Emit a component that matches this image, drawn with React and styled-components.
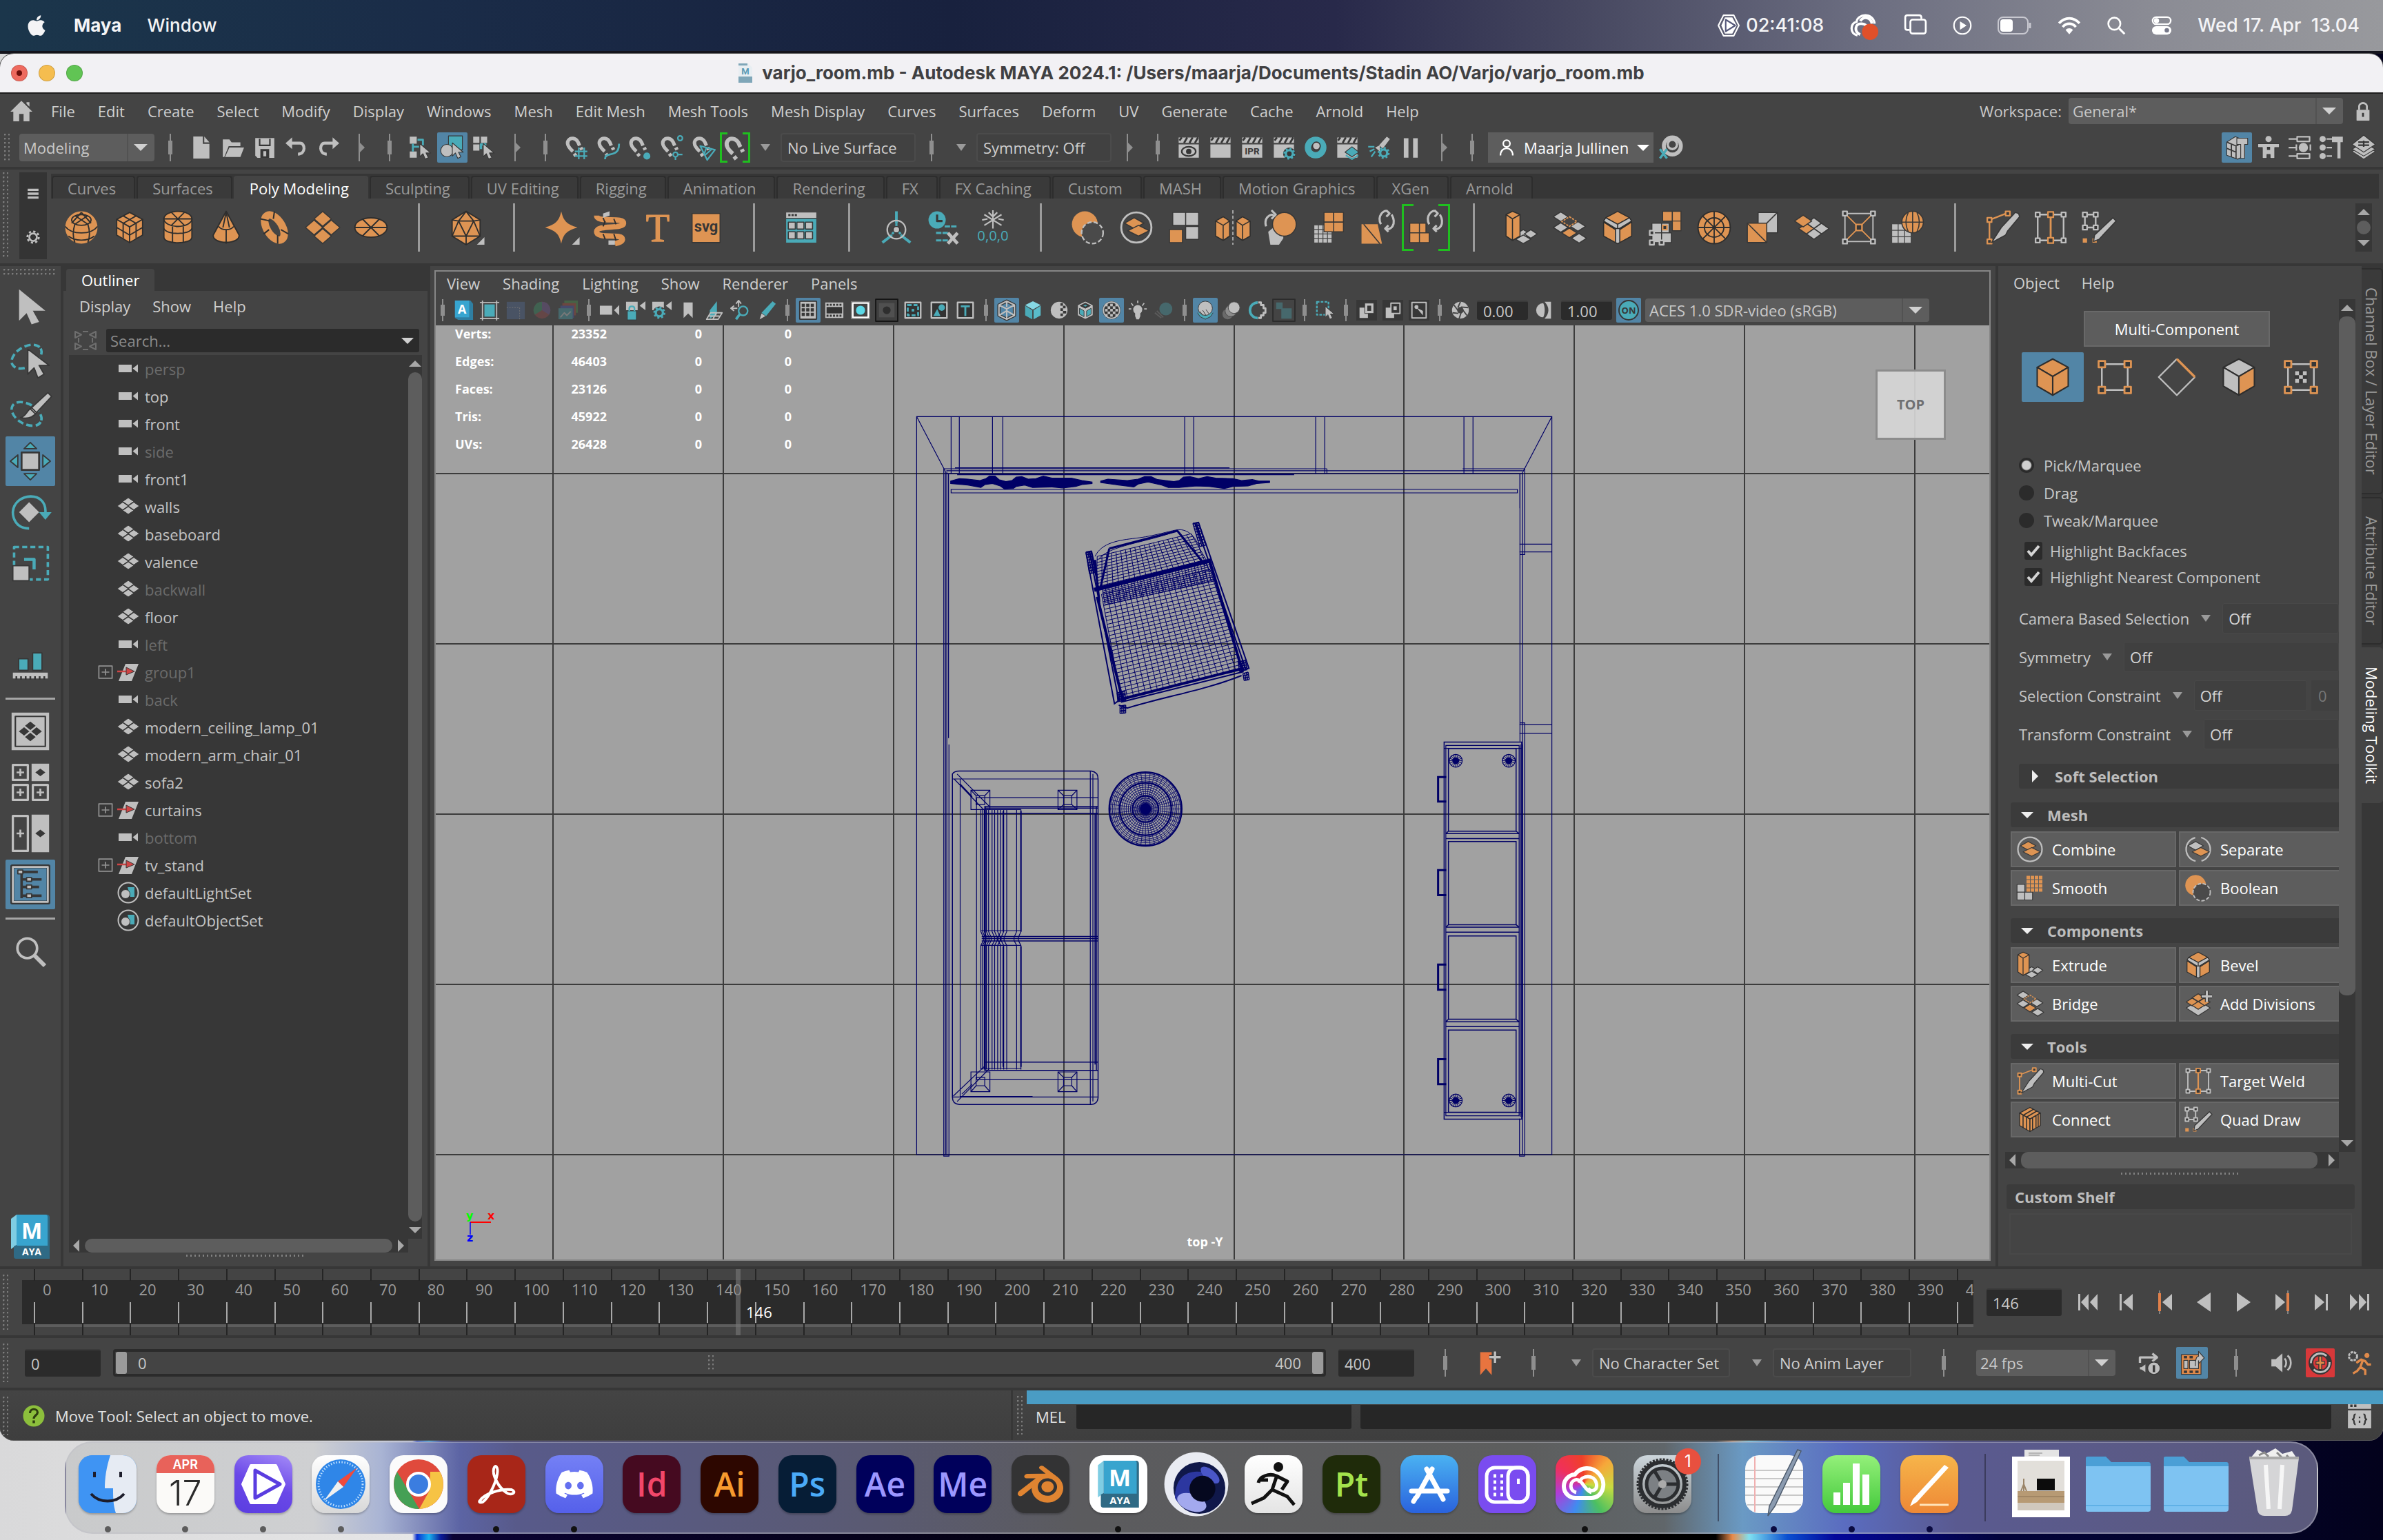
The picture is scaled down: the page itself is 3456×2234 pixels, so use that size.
import React from "react";
import styled, { createGlobalStyle, css } from "styled-components";
import { FaApple, FaDiscord } from "react-icons/fa";
import { SiBlender } from "react-icons/si";

const O = "#de9453";
const G = "#bfbfbf";
const T = "#4aabb8";
const D = "#373737";
const NAVY = "#000066";

const ui = `"Open Sans", "Noto Sans", sans-serif`;
const mac = `Inter, Roboto, sans-serif`;

const GlobalStyle = createGlobalStyle`
  * { box-sizing: border-box; }
  html, body { margin: 0; height: 100%; }
  body { font: 22px/28px ${ui}; color: #c8c8c8; background: #0b0524; overflow: hidden; }
  button, input, select { font: inherit; color: inherit; margin: 0; padding: 0; border: 0; background: none; outline: none; }
  svg { display: block; flex: none; }
`;

/* ---------- desktop ---------- */
const Desktop = styled.div`
  min-height: 100vh;
  display: flex;
  flex-direction: column;
  background: linear-gradient(90deg, #d9d9da 0, #e6e6e7 17.3%, #0b2fd0 17.5%, #19b3ee 18%, #0a1a9a 18.5%, #0b0333 19%, #06021c 35%, #020108 55%, #000 72%, #e88a4a 72.7%, #7fe0f0 73.4%, #0a4fd0 75%, #04079a 77%, #03043a 84%, #03021c 100%);
`;
const MenuBar = styled.header`
  height: 74px;
  flex: none;
  display: flex;
  align-items: center;
  justify-content: space-between;
  padding: 0 34px 0 36px;
  font: 26px/32px ${mac};
  color: #f4f4f6;
  background: linear-gradient(90deg, #1b364b 0, #1a2c48 18%, #18213e 40%, #28294a 56%, #45465f 66%, #6b6d80 78%, #8a8b94 90%, #98999d 100%);
  box-shadow: 0 4px 0 #14141c;
`;
const MenuGroup = styled.div`
  display: flex;
  align-items: center;
  gap: ${(p) => p.$gap}px;
`;
const MacItem = styled.button`
  font-weight: ${(p) => (p.$bold ? 700 : 500)};
`;
const Clock = styled.time`
  font-size: 27px;
  font-weight: 500;
  white-space: pre;
`;

/* ---------- window ---------- */
const Win = styled.main`
  flex: 1;
  min-height: 0;
  margin: 4px 0 2px;
  display: flex;
  flex-direction: column;
  border-radius: 20px;
  overflow: hidden;
  background: #444;
  box-shadow: 0 0 0 1px #5a5a5a;
`;
const TitleBar = styled.div`
  height: 58px;
  flex: none;
  display: grid;
  grid-template-columns: 1fr auto 1fr;
  align-items: center;
  padding: 0 16px;
  background: #f2f1f4;
  border-bottom: 2px solid #1e1e1e;
`;
const Lights = styled.div`
  display: flex;
  gap: 16px;
`;
const Light = styled.button`
  width: 24px;
  height: 24px;
  border-radius: 50%;
  background: ${(p) => p.$c};
  border: 1px solid rgba(0, 0, 0, 0.15);
  display: grid;
  place-items: center;
  &::after {
    content: "";
    width: 8px;
    height: 8px;
    border-radius: 50%;
    background: ${(p) => (p.$dot ? "#6d0f0b" : "transparent")};
  }
`;
const Title = styled.h1`
  margin: 0;
  display: flex;
  align-items: center;
  gap: 14px;
  font: 700 26px/32px ${mac};
  color: #404042;
`;
const Line = styled.div`
  height: 4px;
  flex: none;
  background: ${D};
`;
const MainMenu = styled.nav`
  height: 50px;
  flex: none;
  display: flex;
  align-items: center;
  justify-content: space-between;
  padding: 0 14px 0 14px;
`;
const Menus = styled.div`
  display: flex;
  align-items: center;
  gap: 33px;
`;
const MenuBtn = styled.button`
  color: #cfcfcf;
  white-space: nowrap;
`;
const Home = styled.button`
  margin-right: -7px;
`;
const Workspace = styled.label`
  display: flex;
  align-items: center;
  gap: 10px;
`;

/* combo box */
const ComboBox = styled.span`
  display: flex;
  align-items: center;
  flex: none;
  position: relative;
  width: ${(p) => p.$w}px;
  height: ${(p) => p.$h || 40}px;
  border-radius: 4px;
  background: #5d5d5d;
  color: #c9c9c9;
  select {
    appearance: none;
    width: 100%;
    height: 100%;
    padding: 0 40px 0 6px;
    font: 22px/28px ${ui};
  }
  &::before {
    content: "";
    position: absolute;
    right: 38px;
    top: 0;
    bottom: 0;
    width: 2px;
    background: #525252;
  }
  &::after {
    content: "";
    position: absolute;
    right: 10px;
    border: 10px solid transparent;
    border-top-color: #d0d0d0;
    border-bottom-width: 0;
  }
`;
const Combo = ({ w, h, value, label }) => (
  <ComboBox $w={w} $h={h}>
    <select aria-label={label} defaultValue={value}>
      <option>{value}</option>
    </select>
  </ComboBox>
);

const Dots = styled.div`
  flex: none;
  width: ${(p) => p.$w || 8}px;
  height: ${(p) => p.$h || 8}px;
  background: radial-gradient(circle at 1px 1px, #7c7c7c 1px, transparent 2px) 0 0 / 6px 6px;
`;

/* separators between groups of tools */
const Sep = styled.i`
  flex: none;
  width: ${(p) => p.$w || 42}px;
  height: ${(p) => p.$h || 40}px;
  display: flex;
  align-items: center;
  justify-content: center;
  position: relative;
  &::before {
    content: "";
    width: 2px;
    height: 100%;
    background: #8f8f8f;
  }
  &::after {
    content: "";
    position: absolute;
    left: 50%;
    ${(p) =>
      p.$arrow
        ? css`
            border: 8px solid transparent;
            border-left-color: #8f8f8f;
            border-right-width: 0;
          `
        : css`
            width: 6px;
            height: 50%;
            margin-left: -3px;
            background: #8f8f8f;
          `}
  }
`;
const Down = styled.i`
  flex: none;
  width: ${(p) => p.$w || 20}px;
  display: grid;
  place-items: center;
  &::after {
    content: "";
    border: 7px solid transparent;
    border-top: 10px solid #9a9a9a;
    border-bottom-width: 0;
  }
`;
const Field = styled.button`
  flex: none;
  width: ${(p) => p.$w}px;
  height: 42px;
  padding: 0 8px;
  text-align: left;
  border: 2px solid #4b4b4b;
  border-radius: 4px;
  background: #414141;
  color: #cfcfcf;
`;
const NumberInput = styled.input`
  flex: none;
  width: ${(p) => p.$w}px;
  height: ${(p) => p.$h || 40}px;
  padding: 0 9px;
  border-radius: 3px;
  background: #2b2b2b;
  border-top: 2px solid #3a3a3a;
  color: #c8c8c8;
`;

/* status line */
const StatusLine = styled.div`
  height: 56px;
  flex: none;
  display: flex;
  align-items: center;
  gap: 2px;
  padding: 0 6px;
`;
const Tool = styled.button`
  flex: none;
  width: ${(p) => p.$w || 44}px;
  height: ${(p) => p.$h || p.$w || 44}px;
  display: grid;
  place-items: center;
  border-radius: 2px;
  background: ${(p) => (p.$on ? "#5285a6" : "transparent")};
  opacity: ${(p) => (p.$dim ? 0.35 : 1)};
  ${(p) =>
    p.$live &&
    css`
      border: 3px solid #1fbf1f;
      border-image: linear-gradient(90deg, #1fbf1f 24%, transparent 24%, transparent 76%, #1fbf1f 76%) 3;
    `}
`;
const RedTool = styled(Tool)`
  background: #d8383a;
`;
const Grow = styled.span`
  flex: 1;
`;
const UserBtn = styled.button`
  flex: none;
  width: 240px;
  height: 44px;
  display: flex;
  align-items: center;
  gap: 12px;
  padding: 0 8px 0 14px;
  background: #5d5d5d;
  color: #fff;
  white-space: nowrap;
`;

/* shelf */
const Shelf = styled.section`
  height: 136px;
  flex: none;
  display: flex;
  padding: 4px 6px 6px 4px;
`;
const ShelfSide = styled.div`
  width: 40px;
  margin-left: 16px;
  display: flex;
  flex-direction: column;
  align-items: center;
  justify-content: space-around;
  background: #343434;
`;
const ShelfBody = styled.div`
  flex: 1;
  margin: 2px 0 0 6px;
`;
const Tabs = styled.div`
  height: 36px;
  display: flex;
  align-items: flex-end;
  gap: 2px;
  padding-left: 1px;
  background: #363636;
`;
const Tab = styled.button`
  height: 33px;
  padding: 0 26px 0 21px;
  border: 2px solid #2d2d2d;
  border-bottom: 0;
  border-radius: 4px 4px 0 0;
  color: ${(p) => (p.$on ? "#fff" : "#9a9a9a")};
  background: ${(p) => (p.$on ? "#444" : "#3a3a3a")};
  ${(p) => p.$on && "border-color: #444;"}
  white-space: nowrap;
`;
const ShelfIcons = styled.div`
  height: 84px;
  display: flex;
  align-items: center;
  padding: 0 10px 0 9px;
`;
const ShelfRule = styled.i`
  width: 68px;
  display: grid;
  place-items: center;
  &::after {
    content: "";
    width: 3px;
    height: 70px;
    background: #9b9b9b;
  }
`;

/* main region */
const Body = styled.div`
  flex: 1;
  min-height: 0;
  display: flex;
  background: ${D};
`;
const ToolBox = styled.aside`
  width: 88px;
  flex: none;
  margin-right: 4px;
  padding: 4px 0 11px;
  display: flex;
  flex-direction: column;
  align-items: center;
  gap: 2px;
  background: #444;
`;
const ToolDots = styled(Dots)`
  margin-bottom: 7px;
`;
const ToolRule = styled.i`
  width: 72px;
  height: 3px;
  margin: 10px 0 8px;
  background: #a6a6a6;
`;
const Blank = styled.span`
  height: 71px;
`;
const Outliner = styled.section`
  width: 528px;
  flex: none;
  display: flex;
  flex-direction: column;
  padding-top: 4px;
`;
const PanelTab = styled.button`
  align-self: flex-start;
  height: 32px;
  margin-left: 4px;
  padding: 0 22px;
  border-radius: 4px 4px 0 0;
  background: #444;
  color: #fff;
`;
const OutlinerBody = styled.div`
  flex: 1;
  min-height: 0;
  display: flex;
  flex-direction: column;
  padding: 0 8px 14px;
  background: #444;
`;
const OutlinerMenus = styled.div`
  height: 43px;
  display: flex;
  align-items: center;
  gap: 32px;
  padding-left: 15px;
`;
const SearchRow = styled.div`
  height: 50px;
  display: flex;
  align-items: center;
  gap: 14px;
  padding: 8px 4px 0 8px;
`;
const SearchBox = styled.label`
  flex: 1;
  height: 34px;
  display: flex;
  align-items: center;
  padding: 0 8px 0 6px;
  border-radius: 3px;
  background: #2b2b2b;
  input { flex: 1; min-width: 0; }
  input::placeholder { color: #8a8a8a; opacity: 1; }
`;
const TreeWrap = styled.div`
  flex: 1;
  min-height: 0;
  display: flex;
  background: ${D};
`;
const Tree = styled.ul`
  flex: 1;
  margin: 0;
  padding: 0;
  list-style: none;
  overflow: hidden;
`;
const Row = styled.li`
  height: 40px;
  display: grid;
  grid-template-columns: 22px 34px 1fr;
  column-gap: 6px;
  align-items: center;
  padding-left: 42px;
  color: ${(p) => (p.$dim ? "#6b6b6b" : "#c4c4c4")};
`;
const VScroll = styled.div`
  width: ${(p) => p.$w || 20}px;
  flex: none;
  display: flex;
  flex-direction: column;
  align-items: center;
  background: ${D};
`;
const HScroll = styled.div`
  height: ${(p) => p.$h || 20}px;
  flex: none;
  display: flex;
  align-items: center;
  padding: 0 6px;
  gap: 8px;
  margin: 0 ${(p) => p.$mr || 0}px 0 ${(p) => p.$ml || 0}px;
  background: ${D};
`;
const Thumb = styled.i`
  flex: ${(p) => p.$f || 1};
  align-self: stretch;
  border-radius: 10px;
  background: #5d5d5d;
`;
const ScrollRest = styled.i`
  flex: ${(p) => p.$f};
`;
const Caret = styled.i`
  flex: none;
  width: 0;
  height: 0;
  margin: ${(p) => p.$m || 0};
  border: 9px solid transparent;
  border-${(p) => p.$d}: 9px solid ${(p) => p.$c || "#a8a8a8"};
  border-${(p) => ({ top: "bottom", bottom: "top", left: "right", right: "left" })[p.$d]}-width: 0;
`;
const DotRow = styled.i`
  align-self: center;
  width: 172px;
  height: 3px;
  margin: ${(p) => p.$m || "3px 0 0"};
  background: repeating-linear-gradient(90deg, #828282 0 2px, transparent 2px 6px);
`;

/* viewport */
const ViewPanel = styled.section`
  flex: 1;
  min-width: 0;
  margin-left: 4px;
  padding: 6px 7px 8px 6px;
  display: flex;
  background: #444;
`;
const ViewFrame = styled.div`
  flex: 1;
  min-width: 0;
  display: flex;
  flex-direction: column;
  border: 2px solid #868686;
`;
const ViewMenus = styled.div`
  height: 34px;
  display: flex;
  align-items: center;
  gap: 33px;
  padding-left: 16px;
`;
const ViewTools = styled.div`
  height: 44px;
  display: flex;
  align-items: center;
  gap: 2px;
`;
const ViewValues = styled.div`
  display: flex;
  align-items: center;
  gap: 6px;
  margin-left: 4px;
`;
const Canvas = styled.div`
  flex: 1;
  min-height: 0;
  position: relative;
  overflow: hidden;
  background: #a1a1a1;
  > svg { width: 100%; height: 100%; }
`;
const Stats = styled.table`
  position: absolute;
  left: 28px;
  top: -8px;
  border-collapse: collapse;
  font: 700 18px/24px ${ui};
  color: #fff;
  th { text-align: left; width: 160px; }
  th, td { padding: 0; height: 40px; font-weight: 700; }
  td { text-align: right; width: 130px; }
  td:nth-child(2) { width: 60px; }
  td:nth-child(3) { width: 138px; }
`;
const ViewCube = styled.button`
  position: absolute;
  right: 63px;
  top: 64px;
  width: 102px;
  height: 102px;
  border: 3px solid #8c8c8c;
  background: rgba(214, 214, 214, 0.92);
  color: #6e7072;
  font: 700 20px/24px ${ui};
`;
const CameraName = styled.span`
  position: absolute;
  left: 0;
  right: 0;
  bottom: 14px;
  padding-right: 22px;
  text-align: center;
  font: 700 18px/24px ${ui};
  color: #fff;
`;
const Axis = styled.svg`
  position: absolute;
  left: 34px;
  bottom: 2px;
  && { width: 80px; height: 80px; }
`;
const Room = styled.g`
  path, ellipse { vector-effect: non-scaling-stroke; }
`;

/* modeling toolkit */
const Kit = styled.aside`
  width: 527px;
  flex: none;
  margin-left: 4px;
  display: flex;
  flex-direction: column;
  background: #444;
`;
const KitMenus = styled.div`
  height: 48px;
  display: flex;
  align-items: center;
  gap: 32px;
  padding-left: 22px;
`;
const KitScroll = styled.div`
  flex: 1;
  min-height: 0;
  display: flex;
  padding-right: 9px;
`;
const KitContent = styled.div`
  flex: 1;
  min-width: 0;
  overflow: hidden;
  padding: 17px 0 0 18px;
`;
const MultiBtn = styled.button`
  display: block;
  width: 270px;
  height: 52px;
  margin-left: 106px;
  border: 2px solid #696969;
  background: #5d5d5d;
  color: #fff;
`;
const Modes = styled.div`
  display: flex;
  padding: 8px 0 72px 16px;
`;
const Choice = styled.label`
  height: 40px;
  display: flex;
  align-items: center;
  gap: 14px;
  padding-left: 12px;
  input {
    appearance: none;
    width: 22px;
    height: 22px;
    border-radius: 50%;
    background: #2b2b2b;
  }
  input:checked { background: radial-gradient(circle, #d0d0d0 0 6px, #2b2b2b 8px); }
`;
const Checks = styled.div`
  padding-top: 5px;
`;
const Check = styled.label`
  height: 38px;
  display: flex;
  align-items: center;
  gap: 11px;
  padding-left: 20px;
  position: relative;
  input {
    appearance: none;
    width: 26px;
    height: 26px;
    border-radius: 3px;
    background: #2b2b2b;
  }
  svg { position: absolute; left: 23px; }
`;
const Options = styled.div`
  padding: 13px 0 15px 12px;
`;
const Option = styled.div`
  height: 56px;
  display: flex;
  align-items: center;
  gap: 14px;
  white-space: nowrap;
  button {
    height: 44px;
    flex: 1;
    padding: 0 8px;
    text-align: left;
    border: 1px solid #484848;
    border-radius: 3px;
    background: #404040;
    color: #d6d6d6;
  }
  input { width: 40px; height: 44px; padding: 0 10px; background: #404040; color: #777; margin-left: -8px; }
`;
const KitHead = styled.button`
  display: flex;
  align-items: center;
  width: 100%;
  height: 36px;
  border-radius: 4px 0 0 4px;
  background: #3b3b3b;
  color: #bdbdbd;
  font-weight: 700;
  padding-left: 15px;
  gap: 20px;
`;
const SoftHead = styled(KitHead)`
  width: calc(100% - 12px);
  margin: 0 0 20px 12px;
  padding-left: 19px;
  gap: 24px;
`;
const KitGrid = styled.div`
  display: grid;
  grid-template-columns: 240px 240px;
  gap: 4px;
  padding: 6px 0 18px;
`;
const KitBtn = styled.button`
  height: 52px;
  display: grid;
  grid-template-columns: 52px 1fr;
  column-gap: 6px;
  align-items: center;
  justify-items: center;
  border: 2px solid #686868;
  background: #5d5d5d;
  color: #fff;
  white-space: nowrap;
  span { justify-self: start; }
`;
const KitShelf = styled.div`
  padding: 14px 10px 17px 12px;
`;
const KitShelfTitle = styled.h2`
  margin: 0 0 6px;
  height: 36px;
  padding-left: 12px;
  font: 700 22px/36px ${ui};
  color: #bdbdbd;
  border-radius: 4px;
  background: #3b3b3b;
`;
const KitShelfBox = styled.div`
  height: 60px;
  margin: 0 4px;
  border: 2px solid #484848;
`;
const SideTabs = styled.nav`
  width: 31px;
  flex: none;
  display: flex;
  flex-direction: column;
  gap: 4px;
  padding-top: 3px;
`;
const SideTab = styled.button`
  writing-mode: vertical-rl;
  width: 31px;
  padding: 26px 0;
  border: 2px solid ${(p) => (p.$on ? "#444" : "#2d2d2d")};
  border-left: 0;
  border-radius: 0 5px 5px 0;
  background: ${(p) => (p.$on ? "#444" : "#3a3a3a")};
  color: ${(p) => (p.$on ? "#fff" : "#9a9a9a")};
  line-height: 27px;
  white-space: nowrap;
`;

/* time slider */
const TimeRow = styled.div`
  height: 96px;
  flex: none;
  display: flex;
  align-items: center;
  padding-left: 4px;
`;
const Ruler = styled.div`
  flex: 1;
  min-width: 0;
  height: 96px;
  margin-left: 20px;
  position: relative;
  overflow: hidden;
  display: flex;
  padding-left: 17px;
  background: linear-gradient(180deg, transparent 16px, #2b2b2b 16px, #2b2b2b 80px, transparent 80px);
`;
const Tick = styled.span`
  flex: ${(p) => (p.$last ? "0 0 24px" : "1 1 0")};
  min-width: 0;
  overflow: hidden;
  padding: 15px 0 0 13px;
  color: #9c9c9c;
  background:
    linear-gradient(180deg, #252525 17px, transparent 17px, transparent 48px, #a8a8a8 48px, #a8a8a8 78px, transparent 78px, transparent 80px, #252525 80px) 0 0 / 2px 100% no-repeat,
    linear-gradient(180deg, transparent 80px, #5d5d5d 80px, #5d5d5d 84px, transparent 84px);
`;
const Playhead = styled.div`
  position: absolute;
  top: 0;
  bottom: 0;
  left: calc(17px + (100% - 41px) * 0.365);
  width: 7px;
  background: rgba(120, 120, 120, 0.6);
  padding-top: 48px;
  text-indent: 15px;
  white-space: nowrap;
  color: #fff;
`;
const Playback = styled.div`
  width: 594px;
  flex: none;
  display: flex;
  align-items: center;
  padding-left: 19px;
`;
const PlayBtns = styled.div`
  flex: 1;
  display: flex;
  justify-content: space-between;
  padding: 0 14px 0 18px;
`;
const RangeRow = styled.div`
  height: 72px;
  flex: none;
  display: flex;
  align-items: center;
  padding: 0 12px 0 4px;
`;
const RangeTrack = styled.div`
  flex: 1;
  height: 40px;
  margin: 0 18px;
  display: flex;
  align-items: center;
  gap: 16px;
  padding: 0 4px;
  border: 4px solid #2b2b2b;
  border-width: 4px 0;
  border-radius: 4px;
  background: #444;
  box-shadow: inset 3px 0 #2b2b2b, inset -3px 0 #2b2b2b;
`;
const Handle = styled.i`
  width: 16px;
  height: 32px;
  border-radius: 3px;
  background: #9b9b9b;
`;
const Between = styled.span`
  flex: 1;
  display: grid;
  place-items: center;
`;
const RangeTools = styled.div`
  flex: none;
  display: flex;
  align-items: center;
`;
const Space = styled.i`
  flex: none;
  width: ${(p) => p.$w}px;
`;
const HelpRow = styled.div`
  height: 72px;
  flex: none;
  display: flex;
  color: #e2e2e2;
  background: linear-gradient(180deg, #444, #3e3e3e);
`;
const HelpText = styled.div`
  width: 1469px;
  flex: none;
  display: flex;
  align-items: center;
  gap: 15px;
  padding: 2px 0 0 4px;
  border-right: 3px solid ${D};
`;
const HelpIcon = styled.span`
  margin-left: 6px;
`;
const CommandLine = styled.div`
  flex: 1;
  min-width: 0;
  display: flex;
`;
const CommandDots = styled(Dots)`
  align-self: center;
  margin: 0 6px;
`;
const CommandBody = styled.div`
  flex: 1;
  min-width: 0;
  border-top: 20px solid #4a9cc4;
`;
const CommandFields = styled.label`
  display: grid;
  grid-template-columns: 59px 386px 1fr 46px;
  column-gap: 13px;
  align-items: center;
  padding: 0 16px 0 13px;
  height: 35px;
  input { width: 100%; height: 35px; background: #262626; border-radius: 0 0 3px 3px; }
  input:first-of-type { margin-left: -13px; width: calc(100% + 13px); }
  svg { justify-self: end; }
`;

/* dock */
const Dock = styled.footer`
  flex: none;
  height: 134px;
  margin: 0 94px 10px;
  padding: 18px 20px 0 18px;
  display: flex;
  justify-content: space-between;
  border: 2px solid rgba(190, 190, 200, 0.45);
  border-radius: 40px;
  background: linear-gradient(90deg, #c9cacb 0, #cfd0d2 11%, #a9b4d4 14%, #5c64a4 17.5%, #585a8a 20%, #5a5a72 36%, #5b5b5e 45%, #5d5e5e 65%, #60666a 71%, #6a9ac4 74.5%, #5a6cc0 79%, #5a5a90 84%, #5b5a7c 100%);
`;
const DockApp = styled.button`
  width: 84px;
  height: 112px;
  display: flex;
  flex-direction: column;
  align-items: center;
  justify-content: space-between;
  position: relative;
  &::after {
    content: "";
    width: 9px;
    height: 9px;
    border-radius: 50%;
    background: ${(p) => (p.$run ? p.$run : "transparent")};
  }
`;
const Tile = styled.span`
  width: 84px;
  height: 84px;
  flex: none;
  display: grid;
  place-items: center;
  border-radius: 20px;
  background: ${(p) => p.$bg};
  color: ${(p) => p.$c || "#fff"};
  font: 600 48px/56px ${ui};
  box-shadow: 0 2px 3px rgba(0, 0, 0, 0.25);
  overflow: hidden;
`;
const CalTile = styled(Tile)`
  grid-template-rows: 26px 58px;
  align-items: center;
  color: #2a2a2a;
  font: 300 50px/56px ${mac};
  b { width: 84px; height: 26px; background: #e8625a; color: #fff; text-align: center; font: 600 18px/28px ${mac}; }
`;
const Badge = styled.span`
  position: absolute;
  right: -14px;
  top: -10px;
  width: 38px;
  height: 38px;
  border-radius: 50%;
  background: #e8503f;
  color: #fff;
  font: 24px/38px ${mac};
  text-align: center;
`;
const DockRule = styled.i`
  width: 20px;
  height: 98px;
  margin-top: -2px;
  display: flex;
  justify-content: center;
  &::after { content: ""; width: 2px; background: rgba(40, 40, 60, 0.6); }
`;
const FileArt = styled.svg`
  width: 84px;
  height: 84px;
  overflow: visible;
`;

/* ---------- icons ---------- */
const Svg = ({ s = 36, vb = "0 0 32 32", children }) => (
  <svg width={s} height={s} viewBox={vb} fill="none" strokeLinejoin="round" overflow="visible" aria-hidden="true">
    {children}
  </svg>
);
const Magnet = ({ children, big }) => (
  <>
    <g transform={big ? "translate(1 1) scale(1.150)" : "translate(1 1)"}>
      <path d="M10.500 20C5 15 2 10 4.500 6 7.500 1.500 14 2.500 17 8l2 4.500" stroke={G} strokeWidth="4.500" />
      <path d="M12 23l2.500 3M20.500 15l1.500 3" stroke={G} strokeWidth="4.500" />
    </g>
    {children}
  </>
);
const Clap = ({ children }) => (
  <>
    <path d="M3 3h26v7H3zM3 12h26v17H3z" fill={G} />
    <path d="M7 3l-3 4M14 3l-4 7M21 3l-4 7M28 3l-4 7" stroke={D} strokeWidth="2.500" />
    {children}
  </>
);
const Arrow = ({ x = 0, y = 0 }) => (
  <path transform={`translate(${x} ${y})`} d="M0 0v17l4-4 3 7 4-2-3-6h6z" fill={G} stroke={D} strokeWidth="1" />
);
const gearPts = (cx, cy, r) => (
  <>
    <circle cx={cx} cy={cy} r={r} stroke={T} strokeWidth={r * 0.65} />
    <circle cx={cx} cy={cy} r={r * 1.45} stroke={T} strokeWidth={r * 0.5} strokeDasharray={`${r * 0.57} ${r * 0.57}`} />
  </>
);
const Box = ({ a = O, b = O, c = O }) => (
  <g stroke="#2e2e2e" strokeWidth="1.100">
    <path d="M16 2l12 6.500-12 7-12-7z" fill={a} />
    <path d="M4 8.500l12 7V30L4 23z" fill={b} />
    <path d="M28 8.500l-12 7V30l12-7z" fill={c} />
  </g>
);
const Dia = ({ x, y, w = 6, h = 4, c = G, k = D }) => (
  <path d={`M${x} ${y - h}l${w} ${h}-${w} ${h}-${w}-${h}z`} fill={c} stroke={k} strokeWidth="1" />
);
const Pt = ({ x, y, c = G, r = 2 }) => (
  <rect x={x - r} y={y - r} width={r * 2} height={r * 2} fill={D} stroke={c} strokeWidth="1.500" />
);
const Sq = ({ x, y, w = 9, h = w, c = G }) => <rect x={x} y={y} width={w} height={h} fill={c} stroke={D} strokeWidth="0.900" />;
const grid = (x, y, n, w, c) =>
  Array.from({ length: n * n }, (_, i) => (
    <rect key={i} x={x + (i % n) * w} y={y + Math.floor(i / n) * w} width={w - 0.8} height={w - 0.8} fill={c} />
  ));

const I = {
  home: (
    <path d="M16 2l15 15h-4v13h-8V20h-6v10H5V17H1zM23 4h4v6l-4-4z" fill={G} />
  ),
  lock: (
    <>
      <path d="M10 14V9c0-7 12-7 12 0v5" stroke={G} strokeWidth="3" />
      <rect x="6" y="14" width="20" height="17" rx="1" fill={G} />
      <path d="M16 19v6" stroke={D} strokeWidth="3" />
    </>
  ),
  newFile: <path d="M5 1h13v10h9v20H5zM20 1l7 8h-7z" fill={G} />,
  open: <path d="M2 29V5h9l3 4h12v5H10L4 29zM11 16h20l-5 13H5z" fill={G} />,
  save: (
    <>
      <path d="M3 3h26v27H6l-3-3z" fill={G} />
      <path d="M8 4h16v10H8zM10 18h12v12H10z" fill={D} />
      <path d="M10 4h12v8H10z" fill={G} />
      <path d="M14 21h4v7h-4z" fill={G} />
    </>
  ),
  undo: (
    <>
      <path d="M8 10h13c7 0 8 15-3 15" stroke={G} strokeWidth="4" />
      <path d="M1 10l9-8v16z" fill={G} />
    </>
  ),
  redo: (
    <>
      <path d="M24 10H11c-7 0-8 15 3 15" stroke={G} strokeWidth="4" />
      <path d="M31 10l-9-8v16z" fill={G} />
    </>
  ),
  selHier: (
    <>
      <path d="M2 2h9v9H2zM2 21h9v8H2z" fill={G} />
      <path d="M6 11v10M12 6h7v7M6 15h8" stroke={T} strokeWidth="2.500" />
      <Arrow x={15} y={11} />
    </>
  ),
  selObj: (
    <>
      <path d="M11 1h18v18H11z" fill={T} stroke={D} />
      <circle cx="9" cy="20" r="8" fill={G} stroke={D} />
      <Arrow x={16} y={10} />
    </>
  ),
  selComp: (
    <>
      <path d="M2 2h8v8H2zM12 2h8v8h-8zM2 12h8v8H2z" fill={G} />
      <path d="M12 18v-6h7" stroke={T} strokeWidth="3" />
      <Arrow x={15} y={11} />
    </>
  ),
  magGrid: <Magnet><path d="M14 21h16M14 27h16M19 16v15M26 16v15" stroke={T} strokeWidth="2" /></Magnet>,
  magCurve: <Magnet><path d="M12 31c0-6 4-5 10-7 7-2 8-7 8-13" stroke={T} strokeWidth="2.500" /></Magnet>,
  magPoint: <Magnet><circle cx="25" cy="27" r="4.500" fill={T} /></Magnet>,
  magProj: <Magnet><g stroke={T} strokeWidth="2"><circle cx="27" cy="4" r="3" /><circle cx="21" cy="25" r="3" /><path d="M21 28v4M24 25h6" /></g></Magnet>,
  magPlane: <Magnet><path d="M12 14l19 5-10 13zM20 16l-3 9M27 18l-9 8" stroke={T} strokeWidth="2" /></Magnet>,
  magLive: <Magnet big />,
  clapEye: <Clap><ellipse cx="16" cy="21" rx="9" ry="6" fill={G} stroke={D} strokeWidth="2" /><circle cx="16" cy="21" r="3.500" fill={D} /></Clap>,
  clap: <Clap />,
  clapIpr: <Clap><text x="16" y="25" fontSize="12" fontWeight="700" textAnchor="middle" fill={D} fontFamily="Roboto, sans-serif">IPR</text></Clap>,
  clapGear: <Clap><circle cx="23" cy="24" r="8" fill={D} />{gearPts(23, 24, 4.5)}</Clap>,
  ring: (
    <>
      <circle cx="16" cy="16" r="10" stroke={T} strokeWidth="8" />
      <circle cx="17" cy="14" r="5" fill={G} stroke={D} strokeWidth="1.500" />
    </>
  ),
  clapLayer: <Clap><path d="M22 15l9 7-9 6-9-6z" fill={T} stroke={D} /><path d="M14 26l8 5 8-5" stroke={T} strokeWidth="2" /></Clap>,
  lightEd: (
    <>
      <path d="M26 2l4 3-9 12-5-4zM17 13l-6 3 6 5z" fill={G} />
      <path d="M2 15h8M4 21l6-3M6 28l5-7" stroke={T} strokeWidth="2" />
      {gearPts(22, 23, 4.5)}
    </>
  ),
  pause: <path d="M7 4h6v25H7zM19 4h6v25h-6z" fill={G} />,
  user: (
    <g stroke="#fff" strokeWidth="2.800">
      <circle cx="16" cy="9" r="6" />
      <path d="M5 30c0-17 22-17 22 0" />
    </g>
  ),
  xRing: (
    <>
      <circle cx="19" cy="14" r="11" stroke={G} strokeWidth="5" />
      <circle cx="19" cy="12" r="6" stroke={G} strokeWidth="3" />
      <path d="M3 18l9 12M12 18L3 30" stroke={T} strokeWidth="3" />
    </>
  ),
  kitBox: (
    <>
      <path d="M14 2l12 5v20l-9 4L3 26V9z" fill={G} stroke={D} />
      <path d="M3 9l12 5 11-6M15 14v16M9 12v16M3 17l12 5" stroke={D} strokeWidth="1.500" />
      <path d="M16 4h14v8h-4v18h-5V12h-5z" fill={G} stroke={D} />
    </>
  ),
  figure: (
    <>
      <circle cx="16" cy="5" r="4" fill={G} />
      <path d="M2 11h28v5h-6v14h-6v-5h-4v5H8V16H2z" fill={G} stroke={D} />
      <path d="M14 15h4v4h-4z" fill={D} />
    </>
  ),
  channel: (
    <g stroke={G} strokeWidth="2">
      <path d="M1 5h10M1 16h10M1 27h10M12 2h16v6H12zM12 24h16v6H12z" />
      <circle cx="20" cy="16" r="5" fill={G} />
      <path d="M11 12v8M29 12v8" />
    </g>
  ),
  attrs: (
    <g fill={G}>
      <circle cx="4" cy="5" r="4" /><circle cx="4" cy="16" r="4" /><circle cx="4" cy="27" r="4" />
      <path d="M9 4h7v2H9zM9 15h7v2H9zM9 26h7v2H9zM16 2h14v7h-3v21h-4V9h-7z" />
    </g>
  ),
  layers: (
    <g stroke={D}>
      <path d="M16 13l15 8-15 10-15-10z" fill={G} /><path d="M16 10l15 8-15 9-15-9z" fill={G} />
      <path d="M16 0l15 12-15 10L1 12z" fill={G} /><path d="M9 9h14M9 13h14M16 7v8" strokeWidth="2" />
    </g>
  ),
  lines: <path d="M2 6h28M2 16h28M2 26h28" stroke={G} strokeWidth="6" />,
  gear: (
    <>
      <circle cx="16" cy="16" r="8" stroke={G} strokeWidth="4" />
      <circle cx="16" cy="16" r="12" stroke={G} strokeWidth="4" strokeDasharray="4.700 4.700" />
    </>
  ),
  sphere: (
    <>
      <circle cx="16" cy="16" r="15" fill={O} />
      <g stroke="#2e2e2e" strokeWidth="1.200"><ellipse cx="16" cy="9" rx="9" ry="5" /><path d="M1 15c6 8 24 8 30 0M4 24c6 5 18 5 24 0M16 2l-9 10M16 2l9 10M10 13c-2 6-2 12 0 17M22 13c2 6 2 12 0 17M10 5l12 8M22 5l-12 8" /></g>
    </>
  ),
  cube: (
    <>
      <Box />
      <path d="M10 5.200l12 7V26M22 5.200l-12 7V26M4 16l12 7 12-7" stroke="#2e2e2e" strokeWidth="1.200" />
    </>
  ),
  cylinder: (
    <g stroke="#2e2e2e" strokeWidth="1.200">
      <path d="M3 8v17c0 7 26 7 26 0V8z" fill={O} /><ellipse cx="16" cy="8" rx="13" ry="7" fill={O} />
      <path d="M3 8h26M10 2l12 12M22 2L10 14M11 15v15M21 15v15M3 17c2 6 24 6 26 0" />
    </g>
  ),
  cone: (
    <g stroke="#2e2e2e" strokeWidth="1.200">
      <path d="M16 1l12 22c1 9-25 9-24 0z" fill={O} /><path d="M9 15c3 4 11 4 14 0M16 18v13M13 16l3-14 3 14" />
    </g>
  ),
  torus: (
    <g>
      <ellipse cx="16" cy="16" rx="7" ry="13" transform="rotate(-32 16 16)" stroke={O} strokeWidth="7" />
      <path d="M12 10l-9-2M11 18l-5 4M19 23v8M22 18l7 4M15 8l1-7" stroke="#2e2e2e" strokeWidth="1.300" />
    </g>
  ),
  plane: (
    <g><Dia x={16} y={8} w={8} h={7} c={O} /><Dia x={8} y={16} w={8} h={7} c={O} /><Dia x={24} y={16} w={8} h={7} c={O} /><Dia x={16} y={24} w={8} h={7} c={O} /></g>
  ),
  disc: (
    <g stroke="#2e2e2e" strokeWidth="1.200"><ellipse cx="16" cy="16" rx="15" ry="9" fill={O} /><path d="M1 16h30M8 8l16 16M24 8L8 24" /></g>
  ),
  ico: (
    <>
      <g stroke="#2e2e2e" strokeWidth="1.200"><path d="M16 1l13 8v15l-13 8-13-8V9z" fill={O} /><path d="M9 10h14l-7 14zM16 1l-7 9-6-1M16 1l7 9 6-1M9 10L3 24l13 0 13 0-6-14M16 24v8" /></g>
      <path d="M33 25v7h-7z" fill={G} />
    </>
  ),
  star: (
    <><path d="M16 1c2 9 5 12 15 15-10 3-13 6-15 15-2-9-5-12-15-15C11 13 14 10 16 1z" fill={O} /><path d="M33 25v7h-7z" fill={G} /></>
  ),
  helix: (
    <>
      <path d="M4 5c0 7 25 1 25 7S4 13 4 20c0 7 24 1 24 7 0 2-3 3-7 4" stroke={O} strokeWidth="5" />
      <path d="M10 7l2 5M20 8l2 5M10 15l2-5M10 22l2 5M20 22l2 6" stroke="#2e2e2e" strokeWidth="1.200" />
      <path d="M10 3l6-2v4l-6 2zM15 28l6 0v4h-6z" fill={G} />
    </>
  ),
  type: <text x="16" y="29" fontSize="36" textAnchor="middle" fill={O} stroke={O} strokeWidth="0.800" fontFamily="Liberation Serif, serif">T</text>,
  svg: (
    <><rect x="3" y="3" width="26" height="27" fill={O} stroke={D} /><text x="16" y="20" fontSize="14" fontWeight="700" textAnchor="middle" fill={D} fontFamily="Roboto, sans-serif">svg</text></>
  ),
  window: (
    <>
      <path d="M2 2h28v5H2z" fill={G} /><path d="M2 8h28v22H2z" fill={T} />
      <path d="M4 4.500h2M7 4.500h2M10 4.500h2" stroke={D} strokeWidth="2" />
      <g stroke={D} fill={G}>{[4, 12, 20].map((x) => [11, 20].map((y) => <rect key={x + "-" + y} x={x} y={y} width="6.500" height="6.500" />))}</g>
    </>
  ),
  pivot: (
    <>
      <path d="M16 1v11M3 30l9-7M29 30l-9-7" stroke={T} strokeWidth="2.500" /><circle cx="16" cy="18" r="8.500" stroke={G} strokeWidth="1.500" />
      <path d="M16 12v6l-4 4M16 18l4 4" stroke={T} strokeWidth="2" /><circle cx="16" cy="18" r="3" fill={G} stroke={D} />
    </>
  ),
  history: (
    <>
      <circle cx="9" cy="9" r="8" fill={T} /><path d="M9 4v6h5" stroke={D} strokeWidth="2" />
      <path d="M16 15h11M8 21h11M8 28h11" stroke={T} strokeWidth="2" strokeDasharray="5 1" /><path d="M19 21l9 10M28 21l-9 10" stroke={G} strokeWidth="3" />
    </>
  ),
  freeze: (
    <>
      <path d="M16 0v17M8 4l16 10M24 4L8 14M12 2l4 4 4-4M6 9l5-1M26 9l-5-1" stroke={G} strokeWidth="1.400" />
      <text x="16" y="28" fontSize="13" textAnchor="middle" fill={T} fontFamily="Open Sans, sans-serif">0,0,0</text>
    </>
  ),
  boolean: (
    <>
      <circle cx="13" cy="13" r="12" fill={O} /><circle cx="20" cy="21" r="10" fill="#4a4a4a" stroke={G} strokeWidth="1.500" strokeDasharray="4 2" />
    </>
  ),
  combine: (
    <><circle cx="16" cy="16" r="14" stroke={G} strokeWidth="1.800" /><Dia x={14} y={12} w={9} h={5} c={O} /><Dia x={18} y={19} w={10} h={5} c={O} /></>
  ),
  separate: (
    <><circle cx="16" cy="16" r="14" stroke={G} strokeWidth="1.800" strokeDasharray="37 7" strokeDashoffset="-25" /><Dia x={13} y={12} w={9} h={5} c={G} /><Dia x={19} y={19} w={10} h={5} c={O} /></>
  ),
  smooth: (<g><Sq x={1} y={12} w={9} /><Sq x={1} y={21} w={9} /><Sq x={10} y={21} w={9} />{grid(12, 2, 4, 4.8, O)}</g>),
  extract: (<g><Sq x={5} y={2} w={12} /><Sq x={17} y={2} w={12} /><Sq x={17} y={15} w={12} /><Sq x={2} y={18} w={12} c={O} /></g>),
  mirror: (
    <g stroke="#2e2e2e" strokeWidth="1"><path d="M7 6l6 4v14l-6 4-7-4V10z" fill={O} /><path d="M25 6l7 4v14l-7 4-6-4V10z" fill={O} /><path d="M0 10l7 4 6-4M7 14v14M19 10l6 4 7-4M25 14v14" /><path d="M16 0v32" stroke={G} strokeDasharray="3 2" /></g>
  ),
  reduce: (
    <><path d="M4 20l6-5 8 2v9l-4 6H6z" fill={G} /><circle cx="19" cy="13" r="11" fill={O} stroke={D} /><path d="M2 15C0 8 4 4 9 4M7 0l4 4-4 4" stroke={G} strokeWidth="2" /></>
  ),
  remesh: (<g>{grid(2, 14, 4, 4.2, G)}<Sq x={11} y={2} w={9} c={O} /><Sq x={20} y={2} w={9} c={O} /><Sq x={20} y={11} w={9} c={O} /><Sq x={11} y={11} w={9} c={O} /></g>),
  retopo: (
    <><path d="M1 13h15l4 18H1z" fill={O} /><path d="M3 13l15 18" stroke={D} /><path d="M19 13c-4-8 3-14 6-12M29 4c5 9-1 15-5 13M24 0l3 3-3 3M26 14l-3 3 3 3" stroke={G} strokeWidth="2" /></>
  ),
  quadRetopo: (
    <><Sq x={1} y={12} c={O} w={9} /><Sq x={10} y={12} c={O} w={6} h={9} /><Sq x={1} y={21} c={O} w={9} /><Sq x={10} y={21} c={O} w={9} /><path d="M19 13c-4-8 3-14 6-12M29 4c5 9-1 15-5 13M24 0l3 3-3 3M26 14l-3 3 3 3" stroke={G} strokeWidth="2" /></>
  ),
  extrude: (
    <g><Dia x={18} y={22} w={7} h={4} /><Dia x={25} y={22} w={6} h={4} /><Dia x={18} y={27} w={7} h={4} />
      <g stroke="#2e2e2e"><path d="M8 1l7 3v20l-7 4-6-4V4z" fill={O} /><path d="M2 4l6 4 7-4M8 8v20" /></g></g>
  ),
  bridge: (
    <g><Dia x={8} y={6} w={7} h={4.500} /><Dia x={8} y={16} w={7} h={4.500} /><Dia x={24} y={15} w={7} h={4.500} /><Dia x={25} y={26} w={7} h={4.500} /><Dia x={16} y={21} w={7} h={4.500} c={O} />
      <path d="M16 6l7 4.500-7 4.500-7-4.500z" stroke={O} strokeWidth="1.200" strokeDasharray="2 1" /></g>
  ),
  bevel: (
    <g stroke="#2e2e2e"><path d="M16 1l11 6-11 6L5 7z" fill={O} /><path d="M5 7l11 6v5l-13-8zM27 7l-11 6v5l13-8z" fill={G} /><path d="M3 11l11 7v12L3 24zM29 11l-11 7v12l11-6z" fill={O} /><path d="M14 17h4v13l-2 1-2-1z" fill={G} /></g>
  ),
  connectC: (<g><Sq x={13} y={1} w={9} c={O} /><Sq x={22} y={1} w={8} h={9} c={O} /><Sq x={22} y={10} w={8} h={9} c={O} /><Sq x={3} y={12} /><Sq x={12} y={12} w={7} h={9} /><Sq x={3} y={21} /><Sq x={12} y={21} /><Pt x={3} y={21} /><Pt x={12} y={30} /><Pt x={3} y={30} /><Pt x={15} y={16} c={O} /></g>),
  wheel: (
    <g stroke="#2e2e2e" strokeWidth="1.200"><circle cx="16" cy="16" r="15" fill={O} /><circle cx="16" cy="16" r="9" /><path d="M1 16h30M16 1v30M5.500 5.500l21 21M26.500 5.500l-21 21" /></g>
  ),
  duplicate: (
    <g stroke={D}><path d="M12 2h18v19H12z" fill={G} /><path d="M30 2L14 18" /><path d="M2 12h18v18H2z" fill={O} /><path d="M2 12l18 18" /></g>
  ),
  detach: (<g><Dia x={19} y={12} w={7} h={5} /><Dia x={26} y={17} w={7} h={5} /><Dia x={19} y={22} w={7} h={5} /><Dia x={12} y={17} w={7} h={5} c={O} /><Dia x={9} y={10} w={8} h={5.5} c={O} /></g>),
  target: (
    <g><path d="M3 3h26v26H3z" stroke={G} strokeWidth="1.200" /><path d="M5 5l22 22M27 5L5 27" stroke={O} strokeWidth="1.200" /><Pt x={3} y={3} /><Pt x={29} y={3} /><Pt x={3} y={29} /><Pt x={29} y={29} /><Pt x={16} y={16} c={O} r={2.800} /></g>
  ),
  project: (<g>{grid(2, 13, 3, 6, G)}<circle cx="21" cy="11" r="10" fill={O} stroke={D} /><path d="M11 11h20M21 1v20M17 2c-3 6-3 12 0 18M25 2c3 6 3 12 0 18" stroke={D} /></g>),
  knife: (
    <g><path d="M4 29V9l18-7" stroke={O} strokeWidth="1.500" /><Pt x={4} y={9} c={O} /><Pt x={21} y={3} c={O} /><Pt x={4} y={29} c={O} /><path d="M31 3l-3-1-13 14-9 14 13-7 2-4L32 6z" fill={G} stroke={D} /></g>
  ),
  weld: (
    <g><path d="M4 4h24v24H4z" stroke={G} strokeWidth="1.500" /><path d="M16 4v24" stroke={O} strokeWidth="1.800" /><Pt x={4} y={4} /><Pt x={28} y={4} /><Pt x={4} y={28} /><Pt x={28} y={28} /><Pt x={16} y={4} c={O} r={2.500} /><Pt x={16} y={28} c={O} r={2.500} /></g>
  ),
  quad: (
    <g><path d="M3 4h10v12H3z" stroke={G} strokeWidth="1.500" /><Pt x={3} y={4} /><Pt x={13} y={4} /><Pt x={3} y={16} /><Pt x={13} y={16} /><path d="M1 26h4v4H1zM10 26h4v4h-4z" fill={O} /><path d="M29 7l3 3-16 17-5 2 1-6z" fill={G} stroke={D} /></g>
  ),
  divisions: (
    <g><path d="M16 30L2 21l14-9 14 9z" fill={G} stroke={D} /><Dia x={16} y={9} w={7} h={4.500} c={O} /><Dia x={9} y={14} w={7} h={4.500} c={O} /><Dia x={23} y={14} w={7} h={4.500} c={O} /><Dia x={16} y={18} w={7} h={4.500} c={O} /><path d="M26 1v13M19 7.500h13" stroke={D} strokeWidth="4.500" /><path d="M26 1v13M20 7.500h12" stroke={G} strokeWidth="2.500" /></g>
  ),
  connect: (<g><Box /><path d="M20 4.200l-12 7V25.500M24 6.200l-12 7V28M19 14v14.500M23 12v14M25.500 10.500v14" stroke="#2e2e2e" strokeWidth="1.200" /></g>),
  pointer: <path d="M7 1v25l6-6 4 9 6-2-5-9h10z" fill={G} />,
  lasso: (
    <><ellipse cx="13" cy="14" rx="13" ry="8" transform="rotate(-30 13 14)" stroke={T} strokeWidth="2" strokeDasharray="5 2.500" /><path d="M14 8v20l5-5 3 8 5-3-4-7h8z" fill={G} stroke={D} /></>
  ),
  paintSel: (
    <><ellipse cx="13" cy="19" rx="13" ry="8" transform="rotate(30 13 19)" stroke={T} strokeWidth="2" strokeDasharray="5 2.500" /><path d="M30 2l3 3-13 14-4-4zM17 14l4 4c-3 4-8 5-13 4 5-1 5-6 9-8z" fill={G} stroke={D} /></>
  ),
  move: (
    <g stroke={D}><path d="M9 9h14v14H9z" fill={G} strokeWidth="1.500" /><path d="M16 1l5 5H11zM16 31l5-5H11zM0 16l6-5v10zM32 16l-6-5v10z" fill={T} /></g>
  ),
  rotate: (
    <><path d="M15 29C4 29 2 20 2 16 3 0 30-2 28 17" stroke={T} strokeWidth="2" /><path d="M23 16h10l-5 6z" fill={T} /><path d="M15 8l8 8-8 8-8-8z" fill={G} /></>
  ),
  scale: (
    <><path d="M3 3h27v26H3z" stroke={T} strokeWidth="2" strokeDasharray="4 2.500" /><path d="M2 18h13v12H2z" fill={G} stroke={D} /><path d="M11 13h8v8" stroke={T} strokeWidth="2.500" /></>
  ),
  measure: (
    <><path d="M6 11h8v10H6zM18 6h8v15h-8z" fill={T} stroke={D} /><path d="M1 23h30v5H1z" fill={G} /><path d="M4 26v3M8 26v3M12 26v3M16 26v3M20 26v3M24 26v3M28 26v3" stroke={D} strokeWidth="1.500" /></>
  ),
  single: (
    <><path d="M1 1h30v30H1z" fill={G} /><path d="M4 4h24v24H4z" fill={G} stroke={D} strokeWidth="1.200" /><Dia x={16} y={11.5} w={5} h={4} k={G} c={D} /><Dia x={11} y={16} w={5} h={4} k={G} c={D} /><Dia x={21} y={16} w={5} h={4} k={G} c={D} /><Dia x={16} y={20.5} w={5} h={4} k={G} c={D} /></>
  ),
  four: (
    <g><path d="M2 2h12v12H2zM2 18h12v12H2zM18 18h12v12H18z" stroke={G} strokeWidth="1.800" /><path d="M17 1h14v14H17z" fill={G} /><path d="M24 5l4 3-4 3-4-3z" fill={D} /><path d="M8 5v6M5 8h6M8 21v6M5 24h6M24 21v6M21 24h6" stroke={G} strokeWidth="1.500" /></g>
  ),
  two: (
    <g><path d="M2 2h12v28H2z" stroke={G} strokeWidth="1.800" /><path d="M17 1h14v30H17z" fill={G} /><path d="M24 13l4 3-4 3-4-3z" fill={D} /><path d="M8 13v6M5 16h6" stroke={G} strokeWidth="1.500" /></g>
  ),
  outlinerIc: (
    <g><path d="M1.500 1.500h29v29h-29z" stroke={D} strokeWidth="3" /><path d="M2 2h28v28H2z" stroke={G} strokeWidth="1.500" /><path d="M9 6h13M9 6v21M9 12h16M9 18h14M9 25h16" stroke={D} strokeWidth="2" /><path d="M6 4.500h4v3H6zM13 10.500h4v3h-4zM13 16.500h4v3h-4zM13 23.500h4v3h-4z" fill={G} stroke={D} /></g>
  ),
  search: (<><circle cx="13" cy="13" r="9.500" stroke={G} strokeWidth="2.500" /><path d="M20 20l10 10" stroke={G} strokeWidth="4" /></>),
  camera: <path d="M2 10h19v11H2zM30 9.500v12L22.500 15.500z" fill={G} />,
  mesh: (<g><Dia x={16} y={8.500} w={8} h={5.500} /><Dia x={8} y={15} w={8} h={5.500} /><Dia x={24} y={15} w={8} h={5.500} /><Dia x={16} y={21.500} w={8} h={5.500} /></g>),
  group: (<><path d="M12 4h19L21 29H2z" fill={G} /><path d="M0 15h14" stroke="#cf4545" strokeWidth="2.500" /><path d="M13 9l12 6-12 5z" fill="#cf4545" stroke={D} /></>),
  set: (<><circle cx="16" cy="16" r="14.500" stroke={G} strokeWidth="2" /><path d="M15 8h10v14h-6z" fill={T} /><circle cx="12" cy="18" r="6.500" fill={G} stroke={D} /></>),
  plus: (<path d="M2 3h28v26H2zM16 9v14M8 16h16" stroke="#929292" strokeWidth="2.500" />),
  frameSel: (<path d="M1 3v9l9-4.500zM31 3v9l-9-4.500zM1 20v9l9-4.500zM31 20v9l-9-4.500zM12 3h8M12 29h8M6 12v7M26 12v7" stroke="#6e6e6e" strokeWidth="2" />),
  aBadge: (<><path d="M3 1h24l4 5v25H8l-5-3z" fill="#2f7fa3" /><path d="M3 1h22v26H3z" fill="#37a5d0" /><text x="14" y="21" fontSize="19" fontWeight="700" textAnchor="middle" fill="#fff" fontFamily="Open Sans, sans-serif">A</text></>),
  frame: (<><path d="M8 7h16v19H8z" fill={T} /><path d="M5 1v31M27 1v31M1 4h30M1 29h30" stroke={G} strokeWidth="1.800" /></>),
  region: (<><path d="M2 3h28v27H2z" fill="#5570a0" /><path d="M2 12h20v18" stroke="#ccc" strokeDasharray="2 2" /></>),
  colour: (<><circle cx="16" cy="16" r="13" fill="#a04a4a" /><path d="M16 3a13 13 0 0 1 11 20L16 16z" fill="#7a5a9a" /><path d="M16 3a13 13 0 0 0-11 20l11-7z" fill="#3a9a6a" /></>),
  photos: (<><path d="M10 1h21v19H10z" fill="#4a9a4a" /><path d="M7 5h21v19H7z" fill="#b84a3a" /><path d="M4 9h21v19H4z" fill="#4a5ab8" /><path d="M1 13h22v17H1z" fill={T} /><path d="M4 27l6-7 4 4 6-6" stroke="#ddd" strokeWidth="2" /></>),
  cam: <path d="M1 9h19v14H1zM31 8v16l-8-8z" fill={G} />,
  camLock: (<><path d="M1 3h18v13H1zM31 2v14l-9-7z" fill={G} /><path d="M3 17h14v14H3z" fill={T} stroke={D} /><path d="M6 17v-4c0-4 8-4 8 0v4" stroke={T} strokeWidth="2.500" /></>),
  camGear: (<><path d="M1 3h18v13H1zM31 2v14l-9-7z" fill={G} /><circle cx="12" cy="20" r="10" fill="#444" />{gearPts(12, 20, 5.5)}</>),
  bookmark: <path d="M9 4h14v24l-7-7-7 7z" fill={G} />,
  plane2: (<><path d="M9 16L20 2v20L9 29z" fill={T} /><path d="M4 30l6-10h18l-6 10zM8 25h16M14 29l5-8" stroke={G} strokeWidth="2" /></>),
  panZoom: (<><path d="M13 2v9M9 6l4-5 4 5M2 13h9M6 9l-5 4 5 4" stroke={G} strokeWidth="2" /><circle cx="20" cy="17" r="7" stroke={T} strokeWidth="2.500" /><path d="M15 22l-6 8" stroke={T} strokeWidth="4" /></>),
  pencil: (<><path d="M25 2l5 4-15 19-7-5z" fill={T} /><path d="M8 21l6 4-9 5z" fill={G} /></>),
  gridIc: (<><path d="M4 3h24v26H4z" fill={D} stroke={D} strokeWidth="4" /><path d="M4 3h24v26H4z" fill={G} /><g fill={D}>{[6, 13, 20].map((x) => [6, 13, 20].map((y) => <path key={x + "-" + y} d={`M${x} ${y}h5v5h-5z`} />))}</g></>),
  film: (<><path d="M2 4h28v24H2z" fill={G} /><path d="M4 11h24v10H4z" fill="#333" /><path d="M4 7.500h24M4 24.500h24" stroke="#333" strokeWidth="3" strokeDasharray="3 2" /></>),
  gate: (<><path d="M1 2h30v28H1z" fill="#777" /><path d="M4 5h24v22H4z" fill="#444" stroke="#fff" strokeWidth="2.500" /><circle cx="16" cy="16" r="7" fill="#5bd8e6" /></>),
  gateOff: (<><path d="M-1 -1h34v34H-1z" fill="#3f3f3f" stroke="#151515" strokeWidth="2" /><path d="M4 5h24v22H4z" fill="#505050" /><circle cx="16" cy="16" r="6" fill="#2e2e2e" /></>),
  fieldC: (<><path d="M4 4h24v24H4z" fill="#333" stroke={G} strokeWidth="2.500" /><path d="M8 8h16v16H8z" stroke={T} strokeWidth="3" strokeDasharray="6 3" /><path d="M14 14h4v4h-4z" fill={T} /></>),
  safeA: (<><path d="M4 4h24v24H4z" fill="#333" stroke={G} strokeWidth="2.500" /><circle cx="20" cy="12" r="5" fill={T} /><path d="M7 25l6-11 5 11z" fill={T} /></>),
  safeT: (<><path d="M4 4h24v24H4z" fill="#333" stroke={G} strokeWidth="2.500" /><path d="M9 10h14M16 10v15" stroke={T} strokeWidth="3" /></>),
  wire: (<g strokeWidth="2.200" stroke={G}><path d="M16 2l12 6v16l-12 6-12-6V8z" stroke={D} strokeWidth="5" /><path d="M16 2l12 6v16l-12 6-12-6V8zM4 8l12 6 12-6M16 14v16M4 24l12-7 12 7M16 2v9" /></g>),
  shade: (<g><path d="M16 2l12 6-12 7L4 8z" fill="#86d8e4" /><path d="M4 9l11 7v14L4 24z" fill={T} /><path d="M28 9l-11 7v14l11-6z" fill="#59bcca" /></g>),
  halfSph: (<><circle cx="16" cy="16" r="13" fill={G} /><path d="M18 5h4v4h-4zM22 9h4v4h-4zM18 13h4v4h-4zM22 17h5v4h-5zM18 21h4v4h-4z" fill={D} /></>),
  wireSh: (<g stroke={D}><path d="M16 2l12 6v16l-12 6-12-6V8z" fill={G} /><path d="M16 5l8 4-8 4-8-4z" fill={D} /><path d="M16 7l4 2-4 2-4-2zM7 13l7 4v9l-7-4zM25 13l-7 4v9l7-4z" fill={T} /></g>),
  checkS: (<><circle cx="16" cy="16" r="14" fill={D} />{Array.from({ length: 25 }, (_, i) => { const x = 6 + (i % 5) * 4, y = 6 + Math.floor(i / 5) * 4; return (i % 2 === 0) ? <rect key={i} x={x} y={y} width="4" height="4" fill={G} /> : null; })}<circle cx="16" cy="16" r="12.500" stroke={G} strokeWidth="2" /></>),
  bulb: (<g><circle cx="16" cy="15" r="7" fill={G} /><path d="M12 20h8v5l-2 5h-4l-2-5z" fill={G} /><path d="M16 1v4M6 5l3 4M26 5l-3 4M2 14h4M26 14h4" stroke={G} strokeWidth="1.800" /></g>),
  shadow: (<g><circle cx="19" cy="14" r="10" fill={T} /><path d="M2 20l10 8M5 17l10 10" stroke="#888" strokeWidth="2" /></g>),
  ao: (<g><path d="M4 20l4 6 8 4 8-4 4-6" fill={T} stroke={D} /><circle cx="16" cy="13" r="11" fill={G} stroke={D} /><path d="M8 18l4 6M12 16l5 8M17 15l5 7" stroke={D} /></g>),
  blur: (<g><circle cx="10" cy="22" r="8" fill="#6a6a6a" /><circle cx="15" cy="17" r="9" fill="#8c8c8c" stroke="#444" /><circle cx="20" cy="12" r="9" fill={G} stroke="#444" /></g>),
  aa: (<g><path d="M16 4a12 12 0 0 0 0 24" stroke={T} strokeWidth="4" /><path d="M17 4h4v4h4v5h3v7h-3v4h-4v4h-4" stroke={G} strokeWidth="3" /></g>),
  dof: (<><path d="M-1 -1h34v34H-1z" stroke="#000" strokeWidth="2" /><path d="M4 4h10v10H4zM12 13h16v16H12z" fill={T} /></>),
  isolate: (<><path d="M3 3h18v20H3z" stroke={T} strokeWidth="2.500" strokeDasharray="4 2" /><Arrow x={16} y={10} /></>),
  layA: (<><path d="M0 0h32v32H0z" fill={D} /><path d="M5 12h13v16H5z" fill={G} /><path d="M13 5h14v16H13z" fill={G} stroke={D} /><path d="M17 9h6v8h-6z" fill={D} /></>),
  layB: (<><path d="M0 0h32v32H0z" fill={D} /><path d="M5 12h13v16H5z" fill={G} /><path d="M13 5h14v16H13z" fill={D} stroke={G} strokeWidth="2" /><path d="M17 10h5v6h-5z" fill={G} /></>),
  layC: (<><path d="M0 0h32v32H0z" fill={D} /><path d="M5 4h22v24H5z" stroke={G} strokeWidth="2" /><circle cx="12" cy="11" r="3" fill={G} /><path d="M12 12l10 12v-7z" fill={G} /></>),
  aperture: (<g><circle cx="16" cy="16" r="13" fill={G} /><circle cx="16" cy="16" r="5" fill="#444" /><path d="M16 3l-4 9M28 12l-11-1M26 24l-6-8M14 29l3-9M4 20l9 1M6 8l6 8" stroke="#444" strokeWidth="2" /></g>),
  gamma: (<g><path d="M14 5a11 11 0 0 0 0 22c3-6 3-16 0-22z" fill={G} /><path d="M16 3h10v26H16c8-8 8-18 0-26z" fill={G} /></g>),
  on: (<><circle cx="16" cy="16" r="14" fill={T} stroke={D} strokeWidth="2" /><text x="16" y="21" fontSize="13" fontWeight="700" textAnchor="middle" fill={D} fontFamily="Open Sans, sans-serif">ON</text></>),
  toStart: <path d="M2 4h3v24H2zM17 4v24L6 16zM30 4v24L19 16z" fill={G} />,
  stepBack: <path d="M6 4h3v24H6zM25 4v24L11 16z" fill={G} />,
  keyBack: (<><path d="M5 3h4v26H5z" fill="#e0804a" /><path d="M7 -1v4M7 29v4" stroke={G} /><path d="M25 4v24L11 16z" fill={G} /></>),
  playBack: <path d="M25 2v28L5 16z" fill={G} />,
  playFwd: <path d="M7 2v28l20-14z" fill={G} />,
  keyFwd: (<><path d="M23 3h4v26h-4z" fill="#e0804a" /><path d="M25 -1v4M25 29v4" stroke={G} /><path d="M7 4v24l14-12z" fill={G} /></>),
  stepFwd: <path d="M23 4h3v24h-3zM7 4v24l14-12z" fill={G} />,
  toEnd: <path d="M27 4h3v24h-3zM15 4v24l11-12zM2 4v24l11-12z" fill={G} />,
  mark: (<><path d="M4 3h14v28l-7-8-7 8z" fill="#e8743f" /><path d="M22 2v14M15 9h14" stroke={D} strokeWidth="5" /><path d="M22 2v14M15 9h14" stroke={G} strokeWidth="3" /></>),
  loop: (<g><path d="M4 16V9h20M20 4l6 5-6 5M26 16v3M10 23H4" stroke={G} strokeWidth="3" /><path d="M4 23l7-5v10z" fill={G} /><circle cx="22" cy="23" r="8" fill={G} stroke={D} /><path d="M22 19v9" stroke={D} strokeWidth="3" /></g>),
  cache: (<g><path d="M3 6h24v24H3z" fill="#e08a4a" stroke={D} /><path d="M6 9h4M13 9h4M6 27h4M13 27h4M20 27h4" stroke={D} strokeWidth="3" /><path d="M6 13h5v10H6zM13 13h11v10H13z" fill={G} stroke={D} /><path d="M20 20c0-9 2-12 4-12V2l7 8-7 7v-4" fill={G} stroke={D} /></g>),
  sound: (<g><path d="M2 11h6l9-8v26l-9-8H2z" fill={G} /><path d="M20 10c3 3 3 9 0 12M24 6c6 5 6 15 0 20" stroke={G} strokeWidth="2.500" /></g>),
  autokey: (<g><circle cx="16" cy="16" r="12" stroke={D} strokeWidth="6" /><circle cx="16" cy="16" r="12" stroke={G} strokeWidth="2.500" strokeDasharray="28 9" /><path d="M16 7v18M10 16h12" stroke={D} strokeWidth="5" /><path d="M16 8v16M11 16h10" stroke="#e08a4a" strokeWidth="2.500" /></g>),
  runner: (<g><circle cx="8" cy="8" r="5" stroke={G} strokeWidth="2.500" strokeDasharray="3 1" /><circle cx="25" cy="7" r="3" fill="#e08a4a" /><path d="M12 16l6-4 5 2 3 4h4M20 13l-3 8 6 4v6M17 21l-4 5-5 3" stroke="#e08a4a" strokeWidth="2.800" /></g>),
  script: (<g><path d="M1 0h30v6H1zM1 8h30v23H1z" fill={G} /><path d="M4 2h3M9 2h3" stroke={D} strokeWidth="3" /><path d="M11 13c-4 0 0 5-4 6.500 4 1.500 0 6.500 4 6.500M21 13c4 0 0 5 4 6.500-4 1.500 0 6.500-4 6.500M16 16v2M16 21v3" stroke={D} strokeWidth="2" /></g>),
  help: (<g><circle cx="16" cy="16" r="15.500" fill="#8cbf3c" /><path d="M10.500 12c0-8 11-7 11-1 0 4-5.500 4-5.500 9" stroke="#2e3d10" strokeWidth="3.200" /><path d="M16 22.500v4" stroke="#2e3d10" strokeWidth="3.500" /></g>),
  vertexMode: (<g><path d="M6 6h20v20H6z" stroke={G} strokeWidth="1.300" /><Pt x={6} y={6} c={O} r={2.500} /><Pt x={26} y={6} c={O} r={2.500} /><Pt x={6} y={26} c={O} r={2.500} /><Pt x={26} y={26} c={O} r={2.500} /></g>),
  edgeMode: (<g><path d="M16 2L2 16l14 14 14-14" stroke={G} strokeWidth="1.300" /><path d="M16 2l14 14" stroke={O} strokeWidth="1.800" /></g>),
  uvMode: (<g><path d="M6 6h20v20H6z" stroke={G} strokeWidth="1.300" /><Pt x={6} y={6} c={O} r={2.500} /><Pt x={26} y={6} c={O} r={2.500} /><Pt x={6} y={26} c={O} r={2.500} /><Pt x={26} y={26} c={O} r={2.500} /><path d="M11 11h10v10H11z" fill={D} /><path d="M11.500 11.500h3v3h-3zM17.500 11.500h3v3h-3zM14.500 14.500h3v3h-3zM11.500 17.500h3v3h-3zM17.500 17.500h3v3h-3z" fill={G} /></g>),
  objMode: <Box />,
  faceMode: <Box a={G} b={G} />,
};
const Ic = ({ n, s }) => <Svg s={s}>{I[n]}</Svg>;
const MayaLogo = ({ s = 64 }) => (
  <Svg s={s} vb="0 0 64 64">
    <path d="M4 6l8-6v44l-8 6z" fill="#7fcde3" />
    <path d="M12 0h44c3 0 4 2 4 4v60H12c-3 0-4-1-4-4V46l4-2z" fill="#2f6a85" />
    <path d="M12 0h42c2 0 3 1 3 3v42H12z" fill="#38a4ce" />
    <text x="34" y="35" fontSize="32" fontWeight="700" textAnchor="middle" fill="#fff" fontFamily="Open Sans, sans-serif">M</text>
    <text x="34" y="59" fontSize="14" fontWeight="700" textAnchor="middle" fill="#fff" fontFamily="Open Sans, sans-serif">AYA</text>
  </Svg>
);

/* ---------- scene ---------- */
const mix = (a, b, t) => [a[0] + (b[0] - a[0]) * t, a[1] + (b[1] - a[1]) * t];
const pt = (p) => `${p[0].toFixed(1)} ${p[1].toFixed(1)}`;
function meshPath(a, b, c, d, cols, rows) {
  let out = "";
  for (let i = 0; i <= cols; i++) out += `M${pt(mix(a, b, i / cols))}L${pt(mix(d, c, i / cols))}`;
  for (let j = 0; j <= rows; j++) out += `M${pt(mix(a, d, j / rows))}L${pt(mix(b, c, j / rows))}`;
  return out;
}
const rect = (x, y, x2, y2) => `M${x} ${y}H${x2}V${y2}H${x}Z`;
function spokes(cx, cy, rx, ry, n, r0 = 0) {
  let out = "";
  for (let i = 0; i < n; i++) {
    const t = (i / n) * Math.PI * 2;
    out += `M${pt([cx + Math.cos(t) * rx * r0, cy + Math.sin(t) * ry * r0])}L${pt([cx + Math.cos(t) * rx, cy + Math.sin(t) * ry])}`;
  }
  return out;
}
const drawers = [[708, 876], [897, 1066], [1089, 1258], [1280, 1447]];
const handles = [[766, 816], [955, 1006], [1147, 1198], [1339, 1390]];
const Scene = () => (
  <svg viewBox="632 472 2253 1355" preserveAspectRatio="xMidYMid slice" fill="none" role="img" aria-label="Room, top view">
    <g stroke="#3c3c3c" strokeWidth="1.200" shapeRendering="crispEdges">
      <path d={[802, 1049, 1296, 1543, 2036, 2283, 2530, 2777].map((x) => `M${x} 472V1827`).join("")} />
      <path d={[687, 934, 1181, 1428].map((y) => `M632 ${y}H2885`).join("")} />
      <path d="M1790 472V1827M632 1675H2885" strokeWidth="2" />
    </g>
    <Room transform="translate(1310 580) scale(.625 .714286)" stroke={NAVY} strokeWidth="1.200">
      <path d="M31 1533V34H1505V1533ZM31 34L98 146M1505 34L1438 146" />
      <path d={[111, 130, 207, 231, 653, 674, 957, 978, 1301, 1322].map((x) => `M${x} 34V150`).join("")} />
      <path d="M120 138H757M94 140H983M1298 140H1442M100 144H983M983 140V150M983 144H1438M98 150H1438M125 152H907" />
      <path d="M94 140V1536H106V700M98 146V1533M101 146V1533M105 150V687M1431 150V694M1437 146V1533M1442 140V314H1430M1442 1536V656H1430M1430 1460V1536H1442" />
      <path d="M1430 293H1505M1430 309H1505M1430 660H1505M1430 677H1505M111 182H1425V189H111ZM1431 150V220" />
      <path fill={NAVY} d="M110 165L130 160 150 161 178 164 192 160 200 155 213 155 222 162 238 166 252 164 262 157 275 156 290 161 308 160 325 155 345 159 390 159 415 164 438 167V170L415 172 400 176 370 179 345 177 300 178 282 173 262 176 255 180 235 181 225 175 207 170 190 172 180 178 150 173 110 170Z" />
      <path fill={NAVY} d="M458 165L475 161 520 164 545 161 560 156 575 156 590 162 628 166 640 164 650 157 665 156 685 160 705 156 725 159 765 160 785 164 810 162 825 165 850 165V168L820 170 800 175 765 176 745 180 710 176 680 175 640 178 615 178 600 173 568 167 545 171 535 177 500 173 458 168Z" />

      <path strokeWidth="1" d={meshPath([460, 395], [712, 345], [785, 545], [506, 608], 20, 28)} />
      <path strokeWidth="1" d={meshPath([462, 385], [712, 330], [722, 368], [468, 416], 34, 9)} />
      <path strokeWidth="1" d={meshPath([450, 318], [668, 272], [706, 330], [448, 386], 20, 11)} />
      <path strokeWidth="1" d="M445 318C460 290 500 285 540 281S620 266 636 264 680 270 690 310L712 350M455 322C480 296 560 290 630 268" />
      <path strokeWidth="3" d="M478 302L636 266 700 335M478 302L458 380M445 325L455 410" />
      <path strokeWidth="6" d="M443 386L714 326" />
      <path strokeWidth="4" d="M450 400L508 606M712 330L785 545M506 608L790 545" />
      <path strokeWidth="2" d="M424 310L436 308 452 380M424 310L490 617 508 606M432 310L500 610M672 252L685 249 802 545 780 552M679 252L795 548M500 620L520 626C600 604 700 590 785 560M505 614L790 552" />
      <path strokeWidth="1.500" d={meshPath([503, 622], [516, 620], [516, 636], [503, 637], 3, 3) + meshPath([788, 556], [800, 553], [803, 568], [791, 570], 3, 3) + meshPath([424, 309], [437, 307], [448, 350], [432, 353], 3, 8) + meshPath([672, 251], [685, 249], [702, 295], [688, 298], 3, 8) + meshPath([496, 595], [514, 592], [516, 610], [498, 613], 4, 4) + meshPath([777, 532], [794, 529], [798, 548], [780, 551], 4, 4)} />

      {[84, 81, 77, 73, 69, 64, 60, 55, 50, 45, 40, 35, 30, 25, 20, 15, 10, 5].map((r) => (
        <ellipse key={r} cx="562" cy="831" rx={r} ry={r * 0.89} strokeWidth={r === 84 || r === 60 || r === 30 ? 2.4 : 0.9} />
      ))}
      <path strokeWidth=".8" d={spokes(562, 831, 84, 75, 48, 0.1)} />
      <ellipse cx="562" cy="831" rx="12" ry="11" fill={NAVY} />

      <path d="M114 760Q118 754 130 754H436Q452 756 452 770V1418Q450 1431 436 1431H130Q114 1430 114 1416Z" strokeWidth="1.500" />
      <path d="M114 770H452M132 770V1416M114 1416H452M125 760L200 826M118 770L186 832M132 780L160 806M125 1425L200 1358M116 1414L188 1354M136 1410L160 1390M132 1415H300M170 808H452M170 808V1380H452M434 754V1431M440 760V1425" />
      <path d={rect(157, 793, 201, 832) + rect(169, 804, 189, 822) + rect(359, 793, 403, 832) + rect(372, 804, 391, 822) + rect(157, 1365, 201, 1405) + rect(169, 1376, 189, 1393) + rect(359, 1365, 403, 1405) + rect(372, 1376, 391, 1393)} />
      <path d="M359 793L372 804M403 793L391 804M359 832L372 822M403 832L391 822M359 1365L372 1376M403 1365L391 1376M359 1405L372 1393M403 1405L391 1393M157 793L169 804M201 793L189 804M157 1405L169 1393M201 1405L189 1393" />
      <path strokeWidth="1.500" d="M188 826H452M188 829H452M188 840H452M188 1362H452M188 1345H452M182 1090H452M182 1094H452M182 1099H452M448 826V1362M445 840V1350" />
      <path d={[180, 184, 188, 193, 198, 206, 212, 219, 226, 233, 240, 263, 273].map((x) => `M${x} 832V1080L${x > 220 ? x - 6 : x + 6} 1092V1098L${x} 1108V1360`).join("")} />
      <path strokeWidth="2" d="M190 826V1362M232 835V1080M232 1110V1355M273 835V1080M273 1110V1355" />
      <path d="M180 832H273M180 1078H273M180 1108H273M180 1358H273" />

      <path strokeWidth="1.500" d={rect(1255, 695, 1435, 1461)} />
      <path d={rect(1259, 702, 1429, 1454) + "M1255 708H1435M1255 1447H1435M1432 700V1456M1437 700V1456"} />
      {drawers.map(([a, b]) => (
        <path key={a} strokeWidth="1.500" d={rect(1265, a, 1422, b) + (b < 1400 ? `M1259 ${b + 5}H1429M1259 ${b + 15}H1429M1265 ${b}L1259 ${b + 5}M1422 ${b}L1429 ${b + 5}` : "")} />
      ))}
      {handles.map(([a, b]) => (
        <path key={a} strokeWidth="3" d={`M1260 ${a}H1241V${b}H1260`} />
      ))}
      {[[1282, 733], [1405, 733], [1282, 1423], [1405, 1423]].map(([x, y]) => (
        <g key={x + "-" + y}>
          <ellipse cx={x} cy={y} rx="15" ry="13" />
          <ellipse cx={x} cy={y} rx="7" ry="6" fill={NAVY} />
          <path strokeWidth="1" d={spokes(x, y, 15, 13, 16)} />
        </g>
      ))}
    </Room>
  </svg>
);

/* ---------- data ---------- */
const mainMenus = ["File", "Edit", "Create", "Select", "Modify", "Display", "Windows", "Mesh", "Edit Mesh", "Mesh Tools", "Mesh Display", "Curves", "Surfaces", "Deform", "UV", "Generate", "Cache", "Arnold", "Help"];
const shelfTabs = ["Curves", "Surfaces", "Poly Modeling", "Sculpting", "UV Editing", "Rigging", "Animation", "Rendering", "FX", "FX Caching", "Custom", "MASH", "Motion Graphics", "XGen", "Arnold"];
const shelfItems = "sphere cube cylinder cone torus plane disc | ico | star helix type svg | window | pivot history freeze | boolean combine extract mirror reduce remesh retopo quadRetopo! | extrude bridge bevel connectC wheel duplicate detach target project | knife weld quad".split(" ");
const nodes = [
  ["camera", "persp", 1], ["camera", "top"], ["camera", "front"], ["camera", "side", 1], ["camera", "front1"],
  ["mesh", "walls"], ["mesh", "baseboard"], ["mesh", "valence"], ["mesh", "backwall", 1], ["mesh", "floor"],
  ["camera", "left", 1], ["group", "group1", 1], ["camera", "back", 1], ["mesh", "modern_ceiling_lamp_01"],
  ["mesh", "modern_arm_chair_01"], ["mesh", "sofa2"], ["group", "curtains"], ["camera", "bottom", 1],
  ["group", "tv_stand"], ["set", "defaultLightSet"], ["set", "defaultObjectSet"],
];
const viewTools = "| aBadge frame region~ colour~ photos~ | cam camLock camGear bookmark plane2 panZoom pencil | gridIc* film gate gateOff fieldC safeA safeT | wire* shade halfSph wireSh checkS* bulb shadow~ | ao* blur aa dof~ | isolate | layA layB layC |".split(" ");
const stats = [["Verts:", 23352], ["Edges:", 46403], ["Faces:", 23126], ["Tris:", 45922], ["UVs:", 26428]];
const kitGroups = [
  ["Mesh", [["combine", "Combine"], ["separate", "Separate"], ["smooth", "Smooth"], ["boolean", "Boolean"]]],
  ["Components", [["extrude", "Extrude"], ["bevel", "Bevel"], ["bridge", "Bridge"], ["divisions", "Add Divisions"]]],
  ["Tools", [["knife", "Multi-Cut"], ["weld", "Target Weld"], ["connect", "Connect"], ["quad", "Quad Draw"]]],
];

/* ---------- dock icons ---------- */
const folder = (
  <>
    <path d="M-5 4q0-2 3-2h26l8 8h54q3 0 3 4v10H-5z" fill="#4b9fd6" />
    <path d="M-5 16h94v62q0 4-4 4H-1q-4 0-4-4z" fill="#7ec3f2" />
    <path d="M-5 73h94" stroke="#5fb0e6" strokeWidth="2" />
  </>
);
const dockApps = [
  { name: "Finder", run: "#5c5c5c", bg: "#3f94f3", art: <><path d="M0 0h46c-6 18-8 34-8 48h12c0 14 0 26 4 36H0z" fill="#3f94f3" /><path d="M46 0c-6 18-8 34-8 48h12c0 12 0 24 4 36h30V0z" fill="#e6ebf3" /><path d="M23 24v8M61 24v8" stroke="#1d1d2b" strokeWidth="4" /><path d="M18 56c12 14 36 14 48 0" stroke="#1d1d2b" strokeWidth="4" /></> },
  { name: "Calendar", run: "#5c5c5c", cal: true },
  { name: "Clockify", run: "#5c5c5c", bg: "linear-gradient(200deg, #a48bf7, #6a48e8 50%, #5a3de0)", art: <><path d="M24 15h36l12 27-12 27H24L12 42z" fill="#fff" stroke="#fff" strokeWidth="4" /><path d="M30 22l36 20-36 20z" stroke="#5a3de0" strokeWidth="5" /></> },
  { name: "Safari", run: "#5c5c5c", bg: "linear-gradient(#fff, #d8d8d8)", art: <><circle cx="42" cy="42" r="36" fill="#2f86e8" /><circle cx="42" cy="42" r="32" stroke="#bfe0ff" strokeWidth="3" strokeDasharray="1.500 2.500" /><path d="M66 18L46 46l-8-8z" fill="#ef4a3c" /><path d="M18 66l20-28 8 8z" fill="#f0f0f0" /></> },
  { name: "Chrome", bg: "#fbfbfb", art: <><circle cx="42" cy="42" r="36" fill="#e04a3c" /><path d="M11 24l16 27 16 27A36 36 0 0 1 11 24z" fill="#45a055" /><path d="M43 78l15-27 1-27h14A36 36 0 0 1 43 78z" fill="#f6c344" /><circle cx="42" cy="42" r="18" fill="#fff" /><circle cx="42" cy="42" r="14" fill="#3b7de0" /></> },
  { name: "Acrobat", run: "#111", bg: "#a82618", art: <path d="M18 66c6-10 30-18 46-16 8 3 0 10-8 4C44 46 36 28 38 20s7-3 5 8C40 44 30 62 22 68c-4 1-6 0-4-2z" stroke="#fff" strokeWidth="4" /> },
  { name: "Discord", run: "#111", bg: "linear-gradient(#7480f5, #5560ea)", node: <FaDiscord size={58} /> },
  { name: "InDesign", bg: "#450a20", text: "Id", c: "#f2476a" },
  { name: "Illustrator", bg: "#2d0700", text: "Ai", c: "#f79a2e" },
  { name: "Photoshop", bg: "#061d36", text: "Ps", c: "#4aaaf8" },
  { name: "After Effects", bg: "#00005b", text: "Ae", c: "#9c97ff" },
  { name: "Media Encoder", bg: "#00005b", text: "Me", c: "#9c97ff" },
  { name: "Blender", bg: "#333334", c: "#e08431", node: <SiBlender size={66} /> },
  { name: "Maya", run: "#111", bg: "#fff", node: <MayaLogo s={68} /> },
  { name: "Cinema 4D", round: true, art: <><circle cx="42" cy="42" r="42" fill="#e9ebf2" /><circle cx="46" cy="47" r="34" fill="#10184a" /><path d="M14 60c0-30 20-42 50-30-24 0-34 14-26 40-12 2-20-2-24-10z" fill="#2c37a0" /><ellipse cx="36" cy="66" rx="20" ry="11" fill="#a3a9ee" transform="rotate(20 36 66)" /><ellipse cx="60" cy="30" rx="15" ry="7" fill="#4a56c8" transform="rotate(40 60 30)" /><circle cx="50" cy="48" r="17" fill="#05081f" /></> },
  { name: "ZBrush", bg: "linear-gradient(#fff, #e4e4e4)", art: <><circle cx="49" cy="17" r="7" fill="#111" /><path d="M20 40c2-10 16-14 26-10l16 8-8 12M46 32l-6 18 22 10 10 12M40 50L28 62 10 70M22 36l12 0" stroke="#111" strokeWidth="5" /></> },
  { name: "Painter", bg: "#1f2b0a", text: "Pt", c: "#a4e34c" },
  { name: "App Store", bg: "linear-gradient(#4ab2f2, #2a62dd)", art: <path d="M46 20L24 60M38 20l24 44M16 52h52M22 62l-3 5" stroke="#fff" strokeWidth="7" strokeLinecap="round" /> },
  { name: "Remote", bg: "#7a4cf0", art: <><rect x="12" y="18" width="60" height="50" rx="12" stroke="#fff" strokeWidth="5" /><path d="M22 30h4M32 30h4M22 39h4M32 39h4M22 48h4M32 48h4M22 57h4M32 57h4" stroke="#fff" strokeWidth="5" /><rect x="43" y="18" width="29" height="50" rx="12" stroke="#fff" strokeWidth="5" /><path d="M58 34v8" stroke="#fff" strokeWidth="4" /></> },
  { name: "Creative Cloud", run: "#111", bg: "conic-gradient(from 200deg, #3f8cf0, #b03cd8, #f0305a, #f0402a, #f6a83a, #c8dc40, #4cc060, #3f8cf0)", art: <><path d="M30 62a17 17 0 0 1-2-34 22 22 0 0 1 34-2c14 14 6 36-10 36z" stroke="#fff" strokeWidth="6" /><path d="M52 54c-10-2-14-22-24-18-8 3-8 16 2 18M34 40c4-12 22-12 25 0s-8 14-12 8" stroke="#fff" strokeWidth="5" /></> },
  { name: "Settings", bg: "linear-gradient(#ccd6dc, #8d8d8d)", badge: 1, art: <><circle cx="42" cy="42" r="32" stroke="#2b2d30" strokeWidth="6" /><circle cx="42" cy="42" r="36" stroke="#2b2d30" strokeWidth="3" strokeDasharray="3 2" /><circle cx="42" cy="42" r="23" fill="#7c8084" stroke="#2b2d30" strokeWidth="5" /><path d="M42 42h22M42 42L30 22M42 42L30 62" stroke="#2b2d30" strokeWidth="5" /><circle cx="42" cy="42" r="6" fill="#aaa" /></> },
  null,
  { name: "TextEdit", run: "#0a0a40", file: true, art: <><rect width="84" height="84" rx="20" fill="#fafafa" /><path d="M0 22h84M0 34h84M0 46h84M0 58h84M3 72h78" stroke="#c8c8c8" strokeWidth="2" /><path d="M14 2v80" stroke="#f0b0b0" strokeWidth="2" /><path d="M76-8l5 2-38 80-10 14 2-14z" fill="#8b9bb0" stroke="#4c5a6c" strokeWidth="1.500" /></> },
  { name: "Numbers", run: "#0a0a40", bg: "linear-gradient(#94f07a, #44c93c)", art: <path d="M21 54v18M35 40v32M49 12v60M63 28v44" stroke="#fff" strokeWidth="10" /> },
  { name: "Pages", run: "#0a0a40", bg: "linear-gradient(#f6b54a, #ee8836)", art: <><path d="M64 14l6 4L24 68l-10 6 4-10z" fill="#fff" /><path d="M28 72h42" stroke="#ffe2b8" strokeWidth="3" /></> },
  null,
  { name: "Preview", file: true, art: <><path d="M18-8h50v20H18z" fill="#e4e4e4" /><path d="M24-3h20M24 0h16" stroke="#888" /><path d="M0 2h84v88H0z" fill="#fff" /><path d="M8 8h68v52H8z" fill="#e2dfda" /><path d="M8 60h68v20H8z" fill="#d0c8bd" /><path d="M8 52h68v17H8z" fill="#b79a74" /><path d="M8 60h68" stroke="#8a7354" /><path d="M36 34h26v17H36z" fill="#0c0c0c" /><path d="M17 34v18M13 52l4-10 4 10" stroke="#9a8468" strokeWidth="2" /></> },
  { name: "Folder", file: true, art: folder },
  { name: "Folder", file: true, art: folder },
  { name: "Trash", file: true, art: <><path d="M8 4l10-12 12 6 14-8 10 8 14-4 8 12z" fill="#efefef" /><path d="M20 0l8-4 6 6M46-4l8 8M60 0l6 6" stroke="#8a8a8a" strokeWidth="3" /><path d="M6 4h72l-10 76q-2 8-10 8H28q-8 0-10-8z" fill="#dcdcdc" fillOpacity=".95" /><path d="M6 4h72" stroke="#aaa" strokeWidth="4" /><path d="M30 14l4 64M54 14l-4 64" stroke="#f6f6f6" strokeWidth="6" /></> },
];
const DockItem = ({ a }) => (
  <DockApp $run={a.run} aria-label={a.name}>
    {a.cal ? (
      <CalTile $bg="#fbfaf8"><b>APR</b>17</CalTile>
    ) : a.file ? (
      <FileArt viewBox="0 0 84 84" fill="none" aria-hidden="true">{a.art}</FileArt>
    ) : a.round ? (
      <FileArt viewBox="4 4 76 76" fill="none" aria-hidden="true">{a.art}</FileArt>
    ) : (
      <Tile $bg={a.bg} $c={a.c}>{a.text || a.node || <Svg s={84} vb="0 0 84 84">{a.art}</Svg>}</Tile>
    )}
    {a.badge && <Badge>{a.badge}</Badge>}
  </DockApp>
);

const Tools = ({ list, w = 44, s = 36 }) =>
  list.map((k) => {
    const n = k.replace(/[*!~]/, "");
    return (
      <Tool key={k} $w={w} $on={k.endsWith("*")} $live={k.endsWith("!")} $dim={k.endsWith("~")} aria-label={n}>
        <Ic n={n} s={s} />
      </Tool>
    );
  });

export default function App() {
  return (
    <Desktop>
      <GlobalStyle />
      <MenuBar>
        <MenuGroup $gap={37}>
          <FaApple size={34} />
          <MacItem $bold>Maya</MacItem>
          <MacItem>Window</MacItem>
        </MenuGroup>
        <MenuGroup $gap={37}>
          <MenuGroup $gap={8}>
            <Svg s={34}><path d="M9 2h14l7 14-7 14H9L2 16z" stroke="#fff" strokeWidth="2" /><path d="M11 5h10l6 11-6 11H11L6 16z" fill="#fff" /><path d="M12 8l13 8-13 8z" fill="#fff" stroke="#55587a" strokeWidth="2" /></Svg>
            <Clock>02:41:08</Clock>
          </MenuGroup>
          <Svg s={42}><path d="M9 27C0 25 1 13 8 12 9 3 26 1 28 14" stroke="#fff" strokeWidth="2.500" /><path d="M12 26c-7-3-6-12 1-12 6 0 7 4 9 8M12 11c4-6 12-4 13 3" stroke="#fff" strokeWidth="3" /><circle cx="23" cy="23" r="9" fill="#e0502a" /></Svg>
          <Svg s={34}><path d="M8 22H5c-2 0-3-1-3-3V5c0-2 1-3 3-3h16c2 0 3 1 3 3v2" stroke="#fff" strokeWidth="2.500" /><rect x="9" y="8" width="21" height="19" rx="3" stroke="#fff" strokeWidth="2.500" /></Svg>
          <Svg s={28}><circle cx="16" cy="16" r="14" stroke="#fff" strokeWidth="2.500" /><path d="M12 9l11 7-11 7z" fill="#fff" /></Svg>
          <svg width="50" height="26" viewBox="0 0 50 26" fill="none" aria-hidden="true"><rect x="1" y="1" width="43" height="24" rx="7" stroke="#c8c8d0" strokeWidth="2" /><rect x="4" y="4" width="18" height="18" rx="4" fill="#fff" /><path d="M47 9v8" stroke="#c8c8d0" strokeWidth="3" /></svg>
          <Svg s={34}><path d="M2 13c8-9 20-9 28 0M7 18c5-6 13-6 18 0" stroke="#fff" strokeWidth="3.500" /><path d="M11 22c3-3 7-3 10 0l-5 6z" fill="#fff" /></Svg>
          <Svg s={28}><circle cx="13" cy="13" r="10" stroke="#fff" strokeWidth="3" /><path d="M21 21l9 9" stroke="#fff" strokeWidth="3.500" /></Svg>
          <Svg s={30}><rect x="2" y="3" width="28" height="11" rx="5.500" stroke="#fff" strokeWidth="2.500" /><circle cx="8" cy="8.500" r="4" fill="#fff" /><rect x="1" y="17" width="30" height="13" rx="6.500" fill="#fff" /><circle cx="24" cy="23.500" r="3.500" fill="#77798a" /></Svg>
          <Clock>{"Wed 17. Apr  13.04"}</Clock>
        </MenuGroup>
      </MenuBar>

      <Win>
        <TitleBar>
          <Lights>
            <Light $c="#ee6a5f" $dot aria-label="Close" />
            <Light $c="#f5bd4f" aria-label="Minimise" />
            <Light $c="#61c454" aria-label="Zoom" />
          </Lights>
          <Title>
            <svg width="20" height="28" viewBox="0 0 20 28" aria-hidden="true"><path d="M0 0h14l6 6v22H0z" fill="#e8eef2" /><path d="M0 0h13v3H0zM0 19h20v9H0z" fill="#7fa6b8" /><text x="10" y="16" fontSize="13" fontWeight="700" textAnchor="middle" fill="#5a9ab4" fontFamily="Roboto, sans-serif">M</text></svg>
            varjo_room.mb - Autodesk MAYA 2024.1: /Users/maarja/Documents/Stadin AO/Varjo/varjo_room.mb
          </Title>
        </TitleBar>

        <MainMenu>
          <Menus>
            <Home aria-label="Home"><Ic n="home" s={34} /></Home>
            {mainMenus.map((m) => <MenuBtn key={m}>{m}</MenuBtn>)}
          </Menus>
          <MenuGroup $gap={14}>
            <Workspace>Workspace: <Combo w={398} h={38} value="General*" label="Workspace" /></Workspace>
            <Ic n="lock" s={30} />
          </MenuGroup>
        </MainMenu>

        <StatusLine>
          <Dots $h={40} />
          <Space $w={10} />
          <Combo w={196} value="Modeling" label="Menu set" />
          <Sep />
          <Tools list={["newFile", "open", "save", "undo", "redo"]} s={34} />
          <Sep $arrow /><Sep />
          <Tools list={["selHier", "selObj*", "selComp"]} />
          <Sep $arrow /><Sep />
          <Tools list={["magGrid", "magCurve", "magPoint", "magProj", "magPlane", "magLive!"]} />
          <Down $w={40} />
          <Field $w={196}>No Live Surface</Field>
          <Sep />
          <Down $w={40} />
          <Field $w={196}>Symmetry: Off</Field>
          <Sep $arrow /><Sep />
          <Tools list={["clapEye", "clap", "clapIpr", "clapGear", "ring", "clapLayer", "lightEd", "pause"]} />
          <Sep $arrow /><Sep />
          <UserBtn><Ic n="user" s={26} />Maarja Jullinen<Caret $d="top" $c="#fff" /></UserBtn>
          <Tools list={["xRing"]} />
          <Grow />
          <Tools list={["kitBox*", "figure", "channel", "attrs", "layers"]} />
        </StatusLine>
        <Line />

        <Shelf>
          <Dots $h={124} />
          <ShelfSide><Ic n="lines" s={18} /><Ic n="gear" s={22} /></ShelfSide>
          <ShelfBody>
            <Tabs>{shelfTabs.map((t) => <Tab key={t} $on={t === "Poly Modeling"}>{t}</Tab>)}</Tabs>
            <ShelfIcons>
              {shelfItems.map((k, i) =>
                k === "|" ? <ShelfRule key={i} /> : (
                  <Tool key={i} $w={70} $h={68} $live={k.endsWith("!")} aria-label={k.replace("!", "")}><Ic n={k.replace("!", "")} s={50} /></Tool>
                )
              )}
              <Grow />
              <VScroll $w={24}>
                <Caret $d="bottom" $m="8px 0" /><svg width="20" height="20"><circle cx="10" cy="10" r="10" fill="#5d5d5d" /></svg><Caret $d="top" $m="8px 0" />
              </VScroll>
            </ShelfIcons>
          </ShelfBody>
        </Shelf>
        <Line />

        <Body>
          <ToolBox>
            <ToolDots $w={78} $h={12} />
            <Tools w={72} s={58} list={["pointer", "lasso", "paintSel", "move*", "rotate", "scale"]} />
            <Blank />
            <Tools w={72} s={54} list={["measure"]} />
            <ToolRule />
            <Tools w={72} s={58} list={["single", "four", "two", "outlinerIc*"]} />
            <ToolRule />
            <Tools w={72} s={48} list={["search"]} />
            <Grow />
            <MayaLogo s={64} />
          </ToolBox>

          <Outliner>
            <PanelTab>Outliner</PanelTab>
            <OutlinerBody>
              <OutlinerMenus><MenuBtn>Display</MenuBtn><MenuBtn>Show</MenuBtn><MenuBtn>Help</MenuBtn></OutlinerMenus>
              <SearchRow>
                <Ic n="frameSel" s={32} />
                <SearchBox><input placeholder="Search..." aria-label="Search" /><Caret $d="top" $c="#d0d0d0" /></SearchBox>
              </SearchRow>
              <TreeWrap>
                <Tree>
                  {nodes.map(([ic, name, dim]) => (
                    <Row key={name} $dim={dim}>
                      <span>{ic === "group" && <Ic n="plus" s={22} />}</span>
                      <Ic n={ic} s={32} />
                      <span>{name}</span>
                    </Row>
                  ))}
                </Tree>
                <VScroll><Caret $d="bottom" $m="8px 0" /><Thumb /><Caret $d="top" $m="8px 0" /></VScroll>
              </TreeWrap>
              <HScroll $mr={20}><Caret $d="right" /><Thumb /><Caret $d="left" /></HScroll>
              <DotRow />
            </OutlinerBody>
          </Outliner>

          <ViewPanel>
            <ViewFrame>
              <ViewMenus>{["View", "Shading", "Lighting", "Show", "Renderer", "Panels"].map((m) => <MenuBtn key={m}>{m}</MenuBtn>)}</ViewMenus>
              <ViewTools>
                {viewTools.map((k, i) => (k === "|" ? <Sep key={i} $w={20} $h={32} /> : <Tools key={i} list={[k]} w={36} s={30} />))}
                <Tools list={["aperture"]} w={36} s={30} />
                <ViewValues>
                  <NumberInput $w={74} $h={28} defaultValue="0.00" aria-label="Exposure" />
                  <Tools list={["gamma"]} w={36} s={30} />
                  <NumberInput $w={74} $h={28} defaultValue="1.00" aria-label="Gamma" />
                  <Tools list={["on*"]} w={36} s={32} />
                  <Combo w={412} h={34} value="ACES 1.0 SDR-video (sRGB)" label="View transform" />
                </ViewValues>
              </ViewTools>
              <Canvas>
                <Scene />
                <Stats>
                  <tbody>{stats.map(([l, v]) => <tr key={l}><th scope="row">{l}</th><td>{v}</td><td>0</td><td>0</td></tr>)}</tbody>
                </Stats>
                <ViewCube>TOP</ViewCube>
                <CameraName>top -Y</CameraName>
                <Axis viewBox="0 0 80 80" fontFamily="DejaVu Sans, sans-serif" fontWeight="700" fontSize="16" aria-hidden="true">
                  <path d="M16 28h30" stroke="#f00" strokeWidth="2" /><path d="M16 28v18" stroke="#00f" strokeWidth="1.500" />
                  <text x="10" y="24" fill="#0f0">y</text><text x="41" y="24" fill="#f00">x</text><text x="11" y="56" fill="#00f">z</text>
                </Axis>
              </Canvas>
            </ViewFrame>
          </ViewPanel>

          <Kit>
            <KitMenus><MenuBtn>Object</MenuBtn><MenuBtn>Help</MenuBtn></KitMenus>
            <KitScroll>
              <KitContent>
                <MultiBtn>Multi-Component</MultiBtn>
                <Modes>
                  {["objMode*", "vertexMode", "edgeMode", "faceMode", "uvMode"].map((k) => (
                    <Tool key={k} $w={90} $h={72} $on={k.endsWith("*")} aria-label={k.replace("*", "")}><Ic n={k.replace("*", "")} s={60} /></Tool>
                  ))}
                </Modes>
                <Choice><input type="radio" name="pick" defaultChecked />Pick/Marquee</Choice>
                <Choice><input type="radio" name="pick" />Drag</Choice>
                <Choice><input type="radio" name="pick" />Tweak/Marquee</Choice>
                <Checks>
                  {["Highlight Backfaces", "Highlight Nearest Component"].map((c) => (
                    <Check key={c}><input type="checkbox" defaultChecked /><svg width="20" height="20" viewBox="0 0 20 20" fill="none" aria-hidden="true"><path d="M2 10l5 6L18 3" stroke="#d4d4d4" strokeWidth="4" /></svg>{c}</Check>
                  ))}
                </Checks>
                <Options>
                  <Option>Camera Based Selection<Down /><button>Off</button></Option>
                  <Option>Symmetry<Down /><button>Off</button></Option>
                  <Option>Selection Constraint<Down /><button>Off</button><input defaultValue="0" aria-label="Constraint angle" /></Option>
                  <Option>Transform Constraint<Down /><button>Off</button></Option>
                </Options>
                <SoftHead><Caret $d="left" $c="#eee" />Soft Selection</SoftHead>
                {kitGroups.map(([g, items]) => (
                  <React.Fragment key={g}>
                    <KitHead><Caret $d="top" $c="#eee" />{g}</KitHead>
                    <KitGrid>{items.map(([ic, l]) => <KitBtn key={l}><Ic n={ic} s={40} /><span>{l}</span></KitBtn>)}</KitGrid>
                  </React.Fragment>
                ))}
              </KitContent>
              <VScroll $w={24}><Caret $d="bottom" $m="8px 0" /><Thumb $f={83} /><ScrollRest $f={17} /><Caret $d="top" $m="8px 0" /></VScroll>
            </KitScroll>
            <HScroll $h={24} $ml={10} $mr={33}><Caret $d="right" /><Thumb $f={14} /><ScrollRest $f={0} /><Caret $d="left" /></HScroll>
            <DotRow $m="6px 0 0" />
            <KitShelf>
              <KitShelfTitle>Custom Shelf</KitShelfTitle>
              <KitShelfBox />
            </KitShelf>
          </Kit>
          <SideTabs>
            <SideTab>Channel Box / Layer Editor</SideTab>
            <SideTab>Attribute Editor</SideTab>
            <SideTab $on>Modeling Toolkit</SideTab>
          </SideTabs>
        </Body>
        <Line />

        <TimeRow>
          <Dots $h={80} />
          <Ruler>
            {Array.from({ length: 41 }, (_, i) => <Tick key={i} $last={i === 40}>{i * 10}</Tick>)}
            <Playhead>146</Playhead>
          </Ruler>
          <Playback>
            <NumberInput $w={109} defaultValue="146" aria-label="Current time" />
            <PlayBtns>
              {["toStart", "stepBack", "keyBack", "playBack", "playFwd", "keyFwd", "stepFwd", "toEnd"].map((k) => <Tool key={k} $w={40} aria-label={k}><Ic n={k} s={32} /></Tool>)}
            </PlayBtns>
          </Playback>
        </TimeRow>
        <Line />

        <RangeRow>
          <Dots $h={56} />
          <Space $w={24} />
          <NumberInput $w={110} defaultValue="0" aria-label="Animation start" />
          <RangeTrack><Handle />0<Between><Dots $w={8} $h={22} /></Between>400<Handle /></RangeTrack>
          <NumberInput $w={110} defaultValue="400" aria-label="Animation end" />
          <RangeTools>
            <Space $w={24} /><Sep />
            <Space $w={14} /><Tool $w={60} aria-label="Bookmark"><Ic n="mark" s={38} /></Tool>
            <Space $w={12} /><Sep />
            <Space $w={18} /><Down $w={46} /><Field $w={200}>No Character Set</Field>
            <Space $w={16} /><Down $w={46} /><Field $w={201}>No Anim Layer</Field>
            <Space $w={26} /><Sep />
            <Space $w={26} /><Combo w={202} h={38} value="24 fps" label="Frame rate" />
            <Space $w={26} /><Tool $w={46} aria-label="Loop"><Ic n="loop" s={36} /></Tool>
            <Space $w={16} /><Tool $w={46} $on aria-label="Cached playback"><Ic n="cache" s={38} /></Tool>
            <Space $w={20} /><Sep />
            <Space $w={22} /><Tool $w={46} aria-label="Sound"><Ic n="sound" s={34} /></Tool>
            <Space $w={12} /><RedTool $w={42} aria-label="Auto key"><Ic n="autokey" s={36} /></RedTool>
            <Space $w={14} /><Tool $w={44} aria-label="Preferences"><Ic n="runner" s={38} /></Tool>
          </RangeTools>
        </RangeRow>
        <Line />

        <HelpRow>
          <HelpText><Dots $h={56} /><HelpIcon><Ic n="help" s={32} /></HelpIcon>Move Tool: Select an object to move.</HelpText>
          <CommandLine>
            <CommandDots $h={56} />
            <CommandBody>
              <CommandFields>MEL<input aria-label="MEL command" /><input aria-label="Result" readOnly /><Ic n="script" s={36} /></CommandFields>
            </CommandBody>
          </CommandLine>
        </HelpRow>
      </Win>

      <Dock>
        {dockApps.map((a, i) => (a ? <DockItem key={i} a={a} /> : <DockRule key={i} />))}
      </Dock>
    </Desktop>
  );
}
